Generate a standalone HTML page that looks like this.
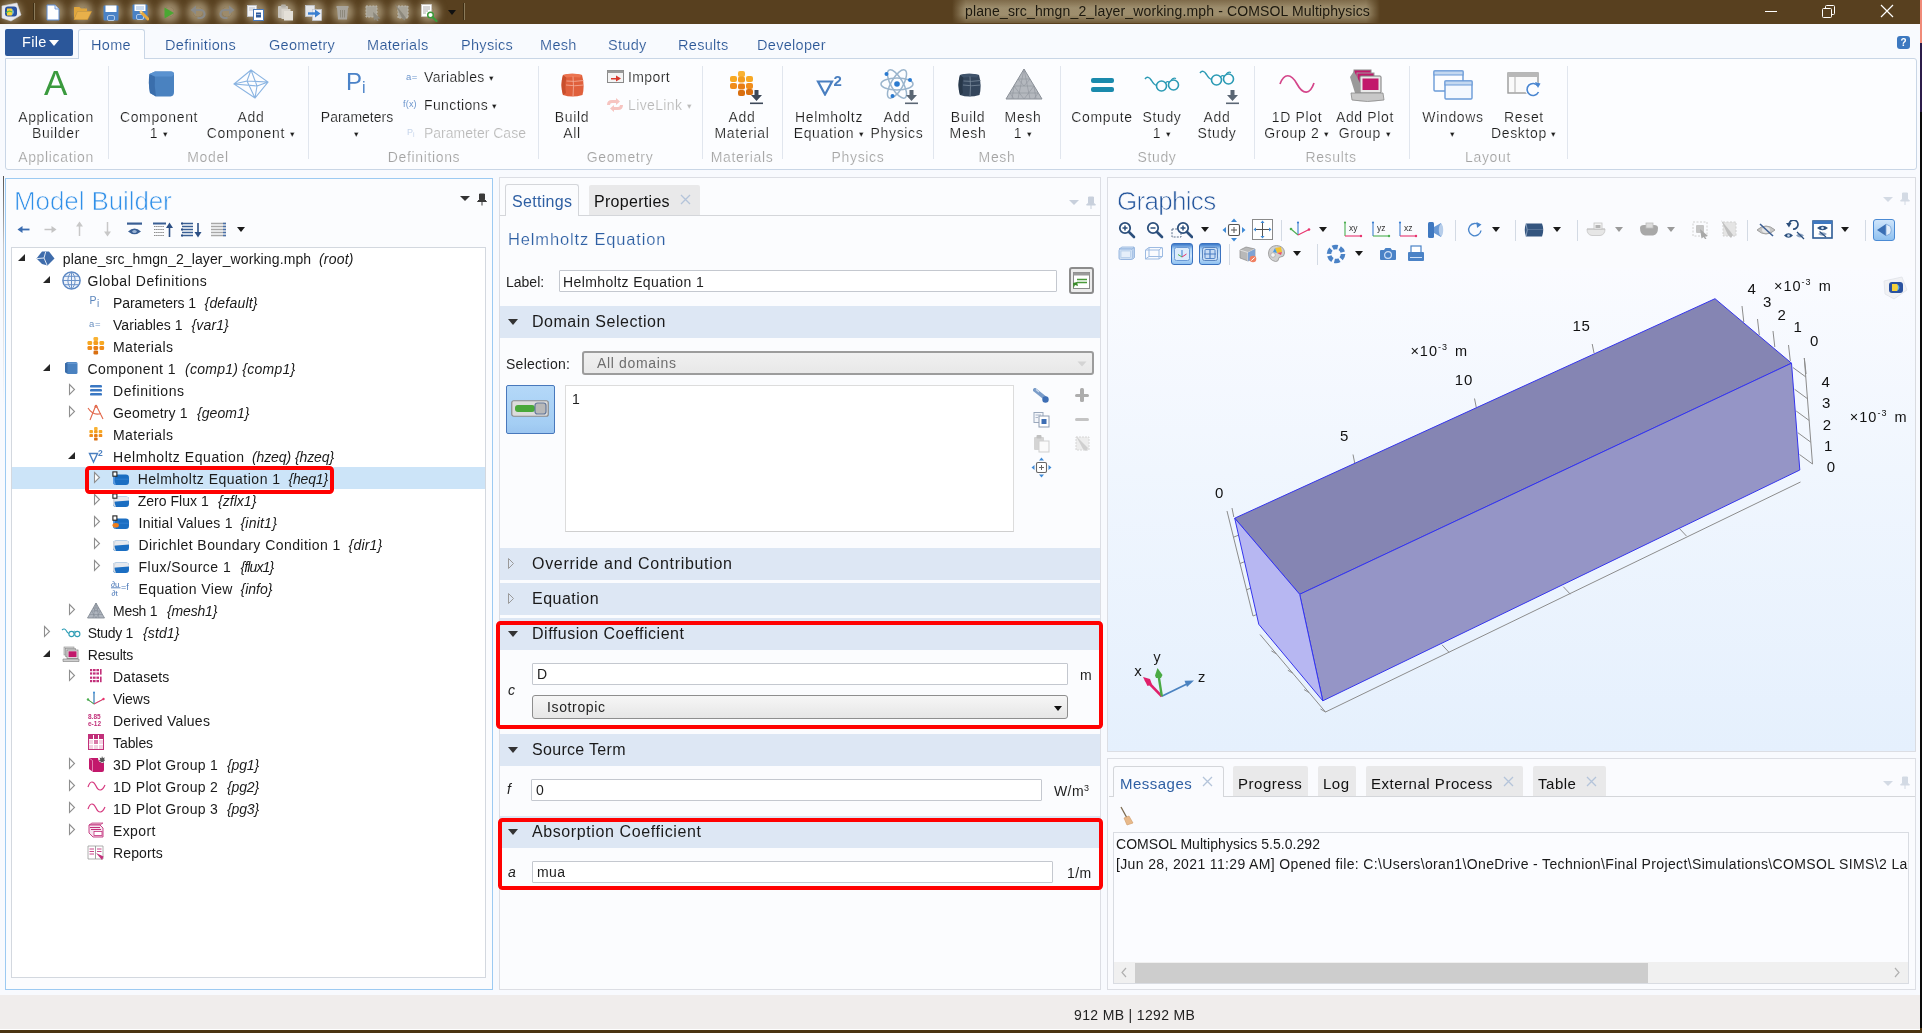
<!DOCTYPE html>
<html><head><meta charset="utf-8"><title>COMSOL Multiphysics</title>
<style>
*{box-sizing:border-box;margin:0;padding:0}
html,body{width:1922px;height:1033px;overflow:hidden;background:#f0edec;font-family:"Liberation Sans",sans-serif;font-size:14px;color:#1e1e1e}
.a{position:absolute}
#root{position:absolute;left:0;top:0;width:1922px;height:1033px;overflow:hidden;will-change:transform;opacity:.999}
.t{position:absolute;white-space:nowrap;line-height:1}
svg{display:block}
.ic{position:absolute}
#titlebar{left:0;top:0;width:1922px;height:24px;background:#58401f}
#bottomstrip{left:0;top:1029px;width:1922px;height:4px;background:#4a3412;border-top:1px solid #fff}
#tabrow{left:0;top:24px;width:1922px;height:971px;background:#f8fafe}
#ribbon{left:5px;top:58px;width:1912px;height:112px;background:#fcfdff;border:1px solid #c9d6e6;border-radius:0 3px 3px 3px}
#gap{left:0;top:170px;width:1922px;height:8px;background:#f8fafe}
.tab{position:absolute;top:38px;font-size:14.5px;color:#2b5797;white-space:nowrap;line-height:1;letter-spacing:.3px}
.rl,.rs,.gl{-webkit-text-stroke:.18px #fcfdff}
.tab{-webkit-text-stroke:.15px #f8fafe}
.rl{position:absolute;font-size:14px;color:#1c1c1c;white-space:nowrap;line-height:16px;text-align:center;transform:translateX(-50%);letter-spacing:.65px}
.rs{position:absolute;font-size:14px;color:#1c1c1c;white-space:nowrap;line-height:16px;letter-spacing:.38px}
.gl{position:absolute;top:150px;font-size:14px;color:#a3a3a3;white-space:nowrap;line-height:1;transform:translateX(-50%);letter-spacing:.65px}
.gs{position:absolute;top:66px;width:1px;height:93px;background:#e1e6ee}
.dis{color:#b9b9b9}
.dd{font-size:9px;position:relative;top:-1px}
.panel{position:absolute;background:#fbfcfe;border:1px solid #c9d9ea}
.tr{position:absolute;height:22px;line-height:22px;font-size:14px;white-space:nowrap;letter-spacing:.45px;color:#1a1a1a}
.tr i{letter-spacing:.2px;margin-left:4px}
.ex{position:absolute;width:0;height:0;border-left:7px solid transparent;border-bottom:7px solid #262626}
.co{position:absolute}
.sh{position:absolute;left:500px;width:600px;height:28px;background:#dde7f4}
.sht{position:absolute;left:532px;font-size:16px;line-height:28px;white-space:nowrap;letter-spacing:.6px;color:#1a1a1a}
.shd{position:absolute;left:508px;width:0;height:0;border-left:5px solid transparent;border-right:5px solid transparent;border-top:6px solid #333}
.inp{position:absolute;background:#fff;border:1px solid #c4c8cf;border-radius:1px;font-size:14px;line-height:20px;padding-left:4px;white-space:nowrap;letter-spacing:.4px}
.lb{position:absolute;font-size:14px;white-space:nowrap;line-height:1;letter-spacing:.4px}
.redbox{position:absolute;border:4px solid #ff0000;border-radius:4.500px}
.ptab{position:absolute;font-size:16px;white-space:nowrap;line-height:1;letter-spacing:.3px}
</style></head><body>
<div id="root">
<div class="a" id="titlebar"></div>
<div class="a" id="tabrow"></div>
<div class="a" id="gap"></div>
<div class="a" id="ribbon"></div>
<!-- title -->
<div class="a" style="left:0;top:0;width:1922px;height:24px;background:#58401f"></div>
<div class="a" style="left:6px;top:7px;width:10px;height:10px;border-radius:50%;background:rgba(226,214,184,0.45);box-shadow:0 0 7px 6px rgba(226,214,184,0.45)"></div>
<div class="a" style="left:48px;top:7px;width:10px;height:10px;border-radius:50%;background:rgba(226,214,184,0.5);box-shadow:0 0 7px 6px rgba(226,214,184,0.5)"></div>
<div class="a" style="left:77px;top:7px;width:10px;height:10px;border-radius:50%;background:rgba(226,214,184,0.5);box-shadow:0 0 7px 6px rgba(226,214,184,0.5)"></div>
<div class="a" style="left:106px;top:7px;width:10px;height:10px;border-radius:50%;background:rgba(226,214,184,0.5);box-shadow:0 0 7px 6px rgba(226,214,184,0.5)"></div>
<div class="a" style="left:135px;top:7px;width:10px;height:10px;border-radius:50%;background:rgba(226,214,184,0.5);box-shadow:0 0 7px 6px rgba(226,214,184,0.5)"></div>
<div class="a" style="left:164px;top:7px;width:10px;height:10px;border-radius:50%;background:rgba(226,214,184,0.5);box-shadow:0 0 7px 6px rgba(226,214,184,0.5)"></div>
<div class="a" style="left:193px;top:7px;width:10px;height:10px;border-radius:50%;background:rgba(226,214,184,0.5);box-shadow:0 0 7px 6px rgba(226,214,184,0.5)"></div>
<div class="a" style="left:221.5px;top:7px;width:10px;height:10px;border-radius:50%;background:rgba(226,214,184,0.5);box-shadow:0 0 7px 6px rgba(226,214,184,0.5)"></div>
<div class="a" style="left:250.5px;top:7px;width:10px;height:10px;border-radius:50%;background:rgba(226,214,184,0.5);box-shadow:0 0 7px 6px rgba(226,214,184,0.5)"></div>
<div class="a" style="left:280px;top:7px;width:10px;height:10px;border-radius:50%;background:rgba(226,214,184,0.5);box-shadow:0 0 7px 6px rgba(226,214,184,0.5)"></div>
<div class="a" style="left:308.5px;top:7px;width:10px;height:10px;border-radius:50%;background:rgba(226,214,184,0.5);box-shadow:0 0 7px 6px rgba(226,214,184,0.5)"></div>
<div class="a" style="left:337.5px;top:7px;width:10px;height:10px;border-radius:50%;background:rgba(226,214,184,0.5);box-shadow:0 0 7px 6px rgba(226,214,184,0.5)"></div>
<div class="a" style="left:367.5px;top:7px;width:10px;height:10px;border-radius:50%;background:rgba(226,214,184,0.5);box-shadow:0 0 7px 6px rgba(226,214,184,0.5)"></div>
<div class="a" style="left:396px;top:7px;width:10px;height:10px;border-radius:50%;background:rgba(226,214,184,0.5);box-shadow:0 0 7px 6px rgba(226,214,184,0.5)"></div>
<div class="a" style="left:423.5px;top:7px;width:10px;height:10px;border-radius:50%;background:rgba(226,214,184,0.5);box-shadow:0 0 7px 6px rgba(226,214,184,0.5)"></div>
<svg class="a" style="left:0.0px;top:2.0px" width="22" height="20" viewBox="0 0 22 20"><path d="M2 4 L17 1 L21 13 L11 19 L2 16Z" fill="#e8e8ec" stroke="#cfd2da" stroke-width=".6"/><rect x="5" y="4.500" width="12" height="10" rx="3" fill="#2a52a0"/><path d="M7 6.500 H11.500 Q15 10 11.500 13.500 H7Z" fill="#f6d23a"/><path d="M11.500 6.500 Q16.500 10 11.500 13.500 Q13.500 10 11.500 6.500Z" fill="#5ab0e8"/><path d="M6 11 Q9 8 12 10" stroke="#5aba4a" stroke-width="1.200" fill="none"/></svg>
<div class="a" style="left:33px;top:3px;width:2px;height:17px;background:#8a7a5a;border-left:1px solid #3e2e14"></div>
<div class="a" style="left:463px;top:3px;width:2px;height:17px;background:#8a7a5a;border-left:1px solid #3e2e14"></div>
<svg class="a" style="left:46.0px;top:4.0px" width="14" height="17" viewBox="0 0 14 17"><path d="M1 1 H9 L13 5 V16 H1Z" fill="#fff" stroke="#5a8ad0" stroke-width="1"/><path d="M9 1 V5 H13" fill="#e4ecf8" stroke="#5a8ad0" stroke-width=".8"/></svg>
<svg class="a" style="left:72.5px;top:5.5px" width="19" height="14" viewBox="0 0 19 14"><path d="M1 1.500 Q1 1 1.500 1 H6.500 L8 2.500 H14 V5 H4.500 L1 13Z" fill="#e0a63c"/><path d="M4.500 5.500 H18.500 L14.500 13.500 H1Z" fill="#e8b04a" stroke="#d89c30" stroke-width=".5"/></svg>
<svg class="a" style="left:103.0px;top:4.5px" width="16" height="16" viewBox="0 0 16 16"><rect x=".5" y=".5" width="15" height="15" rx="1" fill="#4a82c6"/><rect x="2.500" y=".5" width="11" height="6.500" fill="#fff"/><rect x="4.500" y="10.500" width="7" height="5" rx="1.500" fill="#4a82c6" stroke="#bcd2ee" stroke-width=".9"/></svg>
<svg class="a" style="left:131.5px;top:4.0px" width="17" height="17" viewBox="0 0 17 17"><rect x=".5" y=".5" width="15" height="15" rx="1" fill="#4a82c6"/><rect x="2.500" y=".5" width="11" height="6.500" fill="#fff"/><path d="M4 3H12M4 5H12" stroke="#7aa4dc" stroke-width=".8"/><rect x="4.500" y="10.500" width="7" height="5" rx="1.500" fill="#4a82c6" stroke="#bcd2ee" stroke-width=".9"/><path d="M9 8 L16 15" stroke="#e8a83a" stroke-width="3" stroke-linecap="round"/><path d="M8 7 l2.500 .8 -1.700 1.700z" fill="#f4e0b0"/></svg>
<svg class="a" style="left:163.0px;top:6.5px" width="12" height="12" viewBox="0 0 12 12"><path d="M1.500 .5 L11 6 L1.500 11.500Z" fill="#4aa832"/></svg>
<svg class="a" style="left:189.5px;top:5.0px" width="17" height="15" viewBox="0 0 17 15"><path d="M4 5 H10.500 A4 4 0 0 1 10.500 13 H7.500" fill="none" stroke="#8a8a88" stroke-width="2.200"/><path d="M0.500 5 L6 0.500 V9.500Z" fill="#8a8a88"/></svg>
<svg class="a" style="left:218.0px;top:5.0px" width="17" height="15" viewBox="0 0 17 15"><path d="M13 5 H6.500 A4 4 0 0 0 6.500 13 H9.500" fill="none" stroke="#8a8a88" stroke-width="2.200"/><path d="M16.500 5 L11 0.500 V9.500Z" fill="#8a8a88"/></svg>
<svg class="a" style="left:247.0px;top:4.5px" width="17" height="16" viewBox="0 0 17 16"><rect x=".5" y=".5" width="9" height="11" fill="#f4f4f6" stroke="#c4c8d0" stroke-width=".8"/><path d="M2 3H8M2 5H6" stroke="#a8b0c0" stroke-width=".7"/><rect x="6.500" y="4.500" width="10" height="11" fill="#fff" stroke="#4a78b8" stroke-width="1"/><rect x="9" y="7.500" width="5" height="5" fill="#2e5a9c"/><path d="M9.500 9.500H13.500" stroke="#cfdcf0" stroke-width=".7"/></svg>
<svg class="a" style="left:276.5px;top:4.0px" width="17" height="17" viewBox="0 0 17 17"><rect x="1" y="2" width="10" height="12" rx="1" fill="#c8c4bc"/><rect x="4" y=".5" width="5" height="3" rx="1" fill="#b4b0a8"/><rect x="4.500" y="5" width="9" height="10" fill="#d8d4cc"/><rect x="7" y="7" width="9" height="9.500" fill="#e4e0d8"/></svg>
<svg class="a" style="left:305.0px;top:4.5px" width="17" height="16" viewBox="0 0 17 16"><rect x=".5" y=".5" width="9" height="11" fill="#e4e6ea" stroke="#c4c8d0" stroke-width=".7"/><rect x="7.500" y="4.500" width="9" height="11" fill="#eceef2" stroke="#c4c8d0" stroke-width=".7"/><path d="M3 8.500 H11" stroke="#3a7fd0" stroke-width="2.400"/><path d="M10 4.500 L15.500 8.500 L10 12.500Z" fill="#3a7fd0"/></svg>
<svg class="a" style="left:336.0px;top:5.0px" width="13" height="15" viewBox="0 0 13 15"><path d="M1 3 H12 L11 14.500 H2Z" fill="#a8a49c"/><rect x="0.500" y="1" width="12" height="2" fill="#a8a49c"/><path d="M4.500 5V12.500M6.500 5V12.500M8.500 5V12.500" stroke="#8a8678" stroke-width=".9"/></svg>
<svg class="a" style="left:364.5px;top:4.5px" width="16" height="16" viewBox="0 0 16 16"><rect x="1" y="1" width="11" height="11" fill="#a8a498" stroke="#bcb8ac" stroke-width="1" stroke-dasharray="2 1.200"/><path d="M8 7 L15.500 13.500 L12.500 13.500 L13.500 16 L12 16 L11 14 L9 15.500Z" fill="#8c887c"/></svg>
<svg class="a" style="left:393.5px;top:4.0px" width="15" height="17" viewBox="0 0 15 17"><rect x="4" y="2" width="10" height="12" fill="#a8a498" stroke="#bcb8ac" stroke-width="1" stroke-dasharray="2 1.200"/><path d="M1 0 L8 14 L10.500 16.500 L12 14 L9.500 10.500Z" fill="#8c887c"/></svg>
<svg class="a" style="left:421.0px;top:4.0px" width="17" height="18" viewBox="0 0 17 18"><rect x=".5" y=".5" width="10" height="12" fill="#fff" stroke="#d0d0d0" stroke-width=".6"/><path d="M2 3H9M2 5H9M2 7H7M2 9H5" stroke="#9a9a9a" stroke-width=".8"/><circle cx="9.500" cy="11" r="2.800" fill="#fff" stroke="#3a9a3a" stroke-width="1.500"/><path d="M11.700 13.300 L15.500 17" stroke="#3a9a3a" stroke-width="2.200" stroke-linecap="round"/></svg>
<div class="a" style="left:448px;top:10px;width:0;height:0;border-left:4px solid transparent;border-right:4px solid transparent;border-top:5px solid #111"></div>
<div class="a" style="left:952px;top:0;width:428px;height:23px;background:linear-gradient(90deg,rgba(170,156,124,0) 0,rgba(170,156,124,.85) 14px,rgba(170,156,124,.85) 414px,rgba(170,156,124,0) 428px);-webkit-mask-image:linear-gradient(rgba(0,0,0,.55),#000 35%,#000 65%,rgba(0,0,0,.35));mask-image:linear-gradient(rgba(0,0,0,.55),#000 35%,#000 65%,rgba(0,0,0,.35))"></div>
<div class="t" style="left:965px;top:4px;font-size:14px;letter-spacing:.14px;color:#1c180e">plane_src_hmgn_2_layer_working.mph - COMSOL Multiphysics</div>
<div class="a" style="left:1765px;top:11px;width:12px;height:1px;background:#fff"></div>
<svg class="a" style="left:1822px;top:5px" width="13" height="13" viewBox="0 0 13 13"><path d="M3.500 3.500 V1.500 Q3.500 .5 4.500 .5 H11.500 Q12.500 .5 12.500 1.500 V8.500 Q12.500 9.500 11.500 9.500 H9.500" fill="none" stroke="#fff" stroke-width="1"/><rect x=".5" y="3.500" width="9" height="9" rx="1" fill="none" stroke="#fff" stroke-width="1"/></svg>
<svg class="a" style="left:1880px;top:4px" width="14" height="14" viewBox="0 0 14 14"><path d="M1 1 L13 13 M13 1 L1 13" stroke="#fff" stroke-width="1.200"/></svg>

<!-- ribbon -->
<div class="a" style="left:5px;top:29px;width:68px;height:27px;background:#2b579a;border-radius:2px"></div>
<div class="t" style="left:22px;top:35px;font-size:14.5px;color:#fff;letter-spacing:.3px">File</div>
<div class="a" style="left:49px;top:40px;width:0;height:0;border-left:5px solid transparent;border-right:5px solid transparent;border-top:6px solid #fff"></div>
<div class="a" style="left:78px;top:29px;width:67px;height:30px;background:#fcfdff;border:1px solid #c9d6e6;border-bottom:none;border-radius:3px 3px 0 0"></div>
<div class="tab" style="left:91px">Home</div>
<div class="tab" style="left:165px">Definitions</div>
<div class="tab" style="left:269px">Geometry</div>
<div class="tab" style="left:367px">Materials</div>
<div class="tab" style="left:461px">Physics</div>
<div class="tab" style="left:540px">Mesh</div>
<div class="tab" style="left:608px">Study</div>
<div class="tab" style="left:678px">Results</div>
<div class="tab" style="left:757px">Developer</div>
<div class="a" style="left:1897px;top:36px;width:13px;height:13px;background:#3c78c0;border-radius:3px;color:#fff;font-size:10px;font-weight:bold;text-align:center;line-height:13px">?</div>
<div class="gs" style="left:108px"></div>
<div class="gs" style="left:308px"></div>
<div class="gs" style="left:538px"></div>
<div class="gs" style="left:702px"></div>
<div class="gs" style="left:782px"></div>
<div class="gs" style="left:933px"></div>
<div class="gs" style="left:1060px"></div>
<div class="gs" style="left:1254px"></div>
<div class="gs" style="left:1409px"></div>
<div class="gs" style="left:1567px"></div>
<div class="gl" style="left:56px">Application</div>
<div class="gl" style="left:208px">Model</div>
<div class="gl" style="left:424px">Definitions</div>
<div class="gl" style="left:620px">Geometry</div>
<div class="gl" style="left:742px">Materials</div>
<div class="gl" style="left:858px">Physics</div>
<div class="gl" style="left:997px">Mesh</div>
<div class="gl" style="left:1157px">Study</div>
<div class="gl" style="left:1331px">Results</div>
<div class="gl" style="left:1488px">Layout</div>
<div class="rl" style="left:56px;top:109px">Application<br>Builder</div>
<div class="rl" style="left:159px;top:109px">Component<br>1 <span class="dd">▾</span></div>
<div class="rl" style="left:251px;top:109px">Add<br>Component <span class="dd">▾</span></div>
<div class="rl" style="left:357px;top:109px"><span style="letter-spacing:0">Parameters</span><br><span class="dd">▾</span></div>
<div class="rl" style="left:572px;top:109px">Build<br>All</div>
<div class="rl" style="left:742px;top:109px">Add<br>Material</div>
<div class="rl" style="left:829px;top:109px">Helmholtz<br>Equation <span class="dd">▾</span></div>
<div class="rl" style="left:897px;top:109px">Add<br>Physics</div>
<div class="rl" style="left:968px;top:109px">Build<br>Mesh</div>
<div class="rl" style="left:1023px;top:109px">Mesh<br>1 <span class="dd">▾</span></div>
<div class="rl" style="left:1102px;top:109px">Compute</div>
<div class="rl" style="left:1162px;top:109px">Study<br>1 <span class="dd">▾</span></div>
<div class="rl" style="left:1217px;top:109px">Add<br>Study</div>
<div class="rl" style="left:1297px;top:109px">1D Plot<br>Group 2 <span class="dd">▾</span></div>
<div class="rl" style="left:1365px;top:109px">Add Plot<br>Group <span class="dd">▾</span></div>
<div class="rl" style="left:1453px;top:109px">Windows<br><span class="dd">▾</span></div>
<div class="rl" style="left:1524px;top:109px">Reset<br>Desktop <span class="dd">▾</span></div>
<div class="rs" style="left:424px;top:69px">Variables <span class="dd">▾</span></div>
<div class="rs" style="left:424px;top:97px">Functions <span class="dd">▾</span></div>
<div class="rs dis" style="left:424px;top:125px"><span style="letter-spacing:0">Parameter Case</span></div>
<div class="rs" style="left:628px;top:69px">Import</div>
<div class="rs dis" style="left:628px;top:97px">LiveLink <span class="dd">▾</span></div>

<!-- ribicons -->
<div class="t" style="left:44px;top:65px;font-size:35px;color:#3a9a3e;">A</div>
<svg class="a" style="left:147px;top:70px" width="28" height="28" viewBox="0 0 28 28"><path d="M2.500 4 L8 1.500 H24 Q27 1.500 27 4.500 V22 Q27 26 23.500 26.500 H9 L3 23 Q1 12 2.500 4Z" fill="#4a82c0"/><path d="M2.500 4 L8 6.500 Q7 16 9 26.500 L3 23 Q1 12 2.500 4Z" fill="#3a6eac"/><path d="M2.500 4 L8 1.500 H24 Q27 1.500 27 4.500 L25 6.500 H8Z" fill="#5a92d0"/></svg>
<svg class="a" style="left:233px;top:69px" width="36" height="30" viewBox="0 0 36 30"><path d="M18 1 L35 13 L22 29 L1 15Z M18 1 L14 12 L1 15 M14 12 L22 29 M14 12 L35 13 M18 1 L24 17 L35 13 M24 17 L22 29 M24 17 L1 15" fill="none" stroke="#8ab4e2" stroke-width="1.100"/></svg>
<div class="t" style="left:346px;top:70px;font-size:24px;color:#4a82c8">P</div><div class="t" style="left:362px;top:80px;font-size:16px;color:#4a82c8">i</div>
<div class="t" style="left:406px;top:72px;font-size:9.500px;color:#6a94cc;letter-spacing:.5px">a=</div>
<div class="t" style="left:403px;top:100px;font-size:9px;color:#6a94cc;letter-spacing:.2px">f(x)</div>
<div class="t" style="left:407px;top:128px;font-size:9px;color:#c4d4ea">P<span style="font-size:7px;position:relative;top:2px">i</span></div>
<svg class="a" style="left:560px;top:73px" width="25" height="25" viewBox="0 0 25 25"><path d="M3 2 Q12 -0.500 22 2 Q25 12 22.500 22 Q12 25 3 22 Q0 12 3 2Z" fill="#e0603c"/><path d="M3 2 Q0 12 3 22 L6 20 Q4.500 12 6.500 4.500Z" fill="#c84e2c"/><path d="M3 2 Q12 -0.500 22 2 L20 4.500 Q12 3.500 6.500 4.500Z" fill="#ec7450"/><path d="M6 12 Q14 13.500 24 12 M13 3.500 Q14 13 13 24 M6.500 8 Q14 9 23.500 7.500" stroke="#f4b09c" stroke-width=".8" fill="none"/></svg>
<svg class="a" style="left:607px;top:70px" width="17" height="13" viewBox="0 0 17 13"><rect x=".5" y=".5" width="16" height="12" fill="#f4f4f4" stroke="#8a8a8a" stroke-width="1"/><rect x=".5" y=".5" width="16" height="2.500" fill="#9a9a9a"/><path d="M4 8 H9 V5.500 L14 8.500 L9 11.500 V9.500 H4Z" fill="#d8382c"/></svg>
<svg class="a" style="left:604px;top:97px" width="22" height="16" viewBox="0 0 22 16"><path d="M3 8 Q3 3 8 3 H12 V1 L16 4.500 L12 8 V6 H8 Q6 6 6 8Z" fill="#f6c4c0"/><path d="M19 8 Q19 13 14 13 H10 V15 L6 11.500 L10 8 V10 H14 Q16 10 16 8Z" fill="#f6c4c0"/></svg>
<svg class="a" style="left:729px;top:71px" width="26" height="26" viewBox="0 0 26 26"><rect x="9" y="0" width="7" height="6" rx="2" fill="#f9b233"/><rect x="1" y="5" width="7" height="6" rx="2" fill="#f7a823"/><rect x="9" y="5.5" width="7" height="6" rx="2" fill="#f39c1f"/><rect x="17" y="5" width="7" height="6" rx="2" fill="#f7a823"/><rect x="1" y="12" width="7" height="6" rx="2" fill="#f08c1a"/><rect x="9" y="12.5" width="7" height="6" rx="2" fill="#e87d14"/><rect x="17" y="12" width="7" height="6" rx="2" fill="#f08c1a"/><rect x="9" y="19" width="7" height="6" rx="2" fill="#d96f10"/><rect x="17" y="18" width="7" height="6" rx="2" fill="#d96f10"/></svg>
<svg class="a" style="left:750px;top:90px" width="13" height="15" viewBox="0 0 13 15"><path d="M4.500 0 H8.500 V5 H12 L6.500 11 L1 5 H4.500Z" fill="#3c4858"/><rect x="0" y="12.500" width="13" height="1.600" fill="#3c4858"/></svg>
<svg class="a" style="left:816px;top:74px" width="30" height="22" viewBox="0 0 30 22"><path d="M2 7.500 H16 L9 20.500 Z" fill="none" stroke="#4a7fc0" stroke-width="2.200" stroke-linejoin="miter"/><text x="17.500" y="11.500" font-family="Liberation Sans, sans-serif" font-size="15" font-weight="bold" fill="#4a7fc0">2</text></svg>
<svg class="a" style="left:880px;top:66px" width="36" height="36" viewBox="0 0 36 36"><g fill="none" stroke="#9ab4cc" stroke-width="1.500"><ellipse cx="17" cy="18" rx="16" ry="6"/><ellipse cx="17" cy="18" rx="16" ry="6" transform="rotate(60 17 18)"/><ellipse cx="17" cy="18" rx="16" ry="6" transform="rotate(120 17 18)"/></g><circle cx="17" cy="18" r="2.800" fill="#2a7ad0"/><circle cx="6.500" cy="8" r="2" fill="#2a7ad0"/><circle cx="30" cy="14" r="2" fill="#2a7ad0"/><circle cx="12.500" cy="30" r="2" fill="#2a7ad0"/></svg>
<svg class="a" style="left:905px;top:90px" width="13" height="15" viewBox="0 0 13 15"><path d="M4.500 0 H8.500 V5 H12 L6.500 11 L1 5 H4.500Z" fill="#5a6674"/><rect x="0" y="12.500" width="13" height="1.600" fill="#5a6674"/></svg>
<svg class="a" style="left:957px;top:73px" width="25" height="25" viewBox="0 0 25 25"><path d="M3 2 Q12 -0.500 22 2 Q25 12 22.500 22 Q12 25 3 22 Q0 12 3 2Z" fill="#34465c"/><path d="M3 2 Q0 12 3 22 L6 20 Q4.500 12 6.500 4.500Z" fill="#28384a"/><path d="M3 2 Q12 -0.500 22 2 L20 4.500 Q12 3.500 6.500 4.500Z" fill="#40546c"/><path d="M6 12 Q14 13.500 24 12 M13 3.500 Q14 13 13 24 M6.500 8 Q14 9 23.500 7.500" stroke="#7a8a9c" stroke-width=".8" fill="none"/></svg>
<svg class="a" style="left:1005px;top:68px" width="38" height="33" viewBox="0 0 38 33"><path d="M19 1 L37 31 H1 Z" fill="#b4b8be" stroke="#8a9098" stroke-width="1"/><path d="M13 11 H25 M9 18 H29 M5 25 H33 M19 1 L13 31 M19 1 L25 31 M9 18 L19 31 L29 18 M13 11 L19 18 L25 11 M5 25 L9 31 M33 25 L29 31 M9 18 L7 31 M29 18 L31 31" stroke="#8e949c" stroke-width=".6" fill="none"/></svg>
<div class="a" style="left:1091px;top:78px;width:23px;height:5px;background:#1a8aac;border-radius:2px"></div><div class="a" style="left:1091px;top:87px;width:23px;height:5px;background:#1a8aac;border-radius:2px"></div>
<svg class="a" style="left:1144px;top:74px" width="36" height="19" viewBox="0 0 36 19"><path d="M1 5 Q4 1 7.500 6.500 Q10 11 13 11.500" stroke="#2a9ab4" stroke-width="1.500" fill="none"/><circle cx="17.500" cy="12" r="5" fill="none" stroke="#2a9ab4" stroke-width="1.600"/><circle cx="29.500" cy="11" r="5" fill="none" stroke="#2a9ab4" stroke-width="1.600"/><path d="M21.500 9 Q23.500 6.500 25.500 8.500" stroke="#2a9ab4" stroke-width="1.400" fill="none"/><path d="M27 6.500 Q29 3 32 4.500" stroke="#2a9ab4" stroke-width="1.300" fill="none"/></svg>
<svg class="a" style="left:1199px;top:68px" width="36" height="19" viewBox="0 0 36 19"><path d="M1 5 Q4 1 7.500 6.500 Q10 11 13 11.500" stroke="#2a9ab4" stroke-width="1.500" fill="none"/><circle cx="17.500" cy="12" r="5" fill="none" stroke="#2a9ab4" stroke-width="1.600"/><circle cx="29.500" cy="11" r="5" fill="none" stroke="#2a9ab4" stroke-width="1.600"/><path d="M21.500 9 Q23.500 6.500 25.500 8.500" stroke="#2a9ab4" stroke-width="1.400" fill="none"/><path d="M27 6.500 Q29 3 32 4.500" stroke="#2a9ab4" stroke-width="1.300" fill="none"/></svg>
<svg class="a" style="left:1226px;top:90px" width="13" height="15" viewBox="0 0 13 15"><path d="M4.500 0 H8.500 V5 H12 L6.500 11 L1 5 H4.500Z" fill="#5a6674"/><rect x="0" y="12.500" width="13" height="1.600" fill="#5a6674"/></svg>
<svg class="a" style="left:1278px;top:74px" width="38" height="20" viewBox="0 0 38 20"><path d="M2 10 C6 -1 13 -1 19 10 S32 21 36 9" stroke="#d4458a" stroke-width="1.700" fill="none"/></svg>
<svg class="a" style="left:1347px;top:69px" width="38" height="34" viewBox="0 0 38 34"><rect x="7" y="1" width="17" height="13" fill="#c2186b" stroke="#8a8a8a" stroke-width="1"/><rect x="10" y="4" width="17" height="13" fill="#c2186b" stroke="#9a9a9a" stroke-width="1"/><rect x="13" y="7" width="21" height="17" rx="1" fill="#e8e8e8" stroke="#7a7a7a" stroke-width="1"/><rect x="15.500" y="9.500" width="16" height="11.500" fill="#c2186b"/><path d="M3 8 L8 24 L13 24 V14 L7 2Z" fill="#9a9a9a"/><path d="M4 24 H36 L37 31 Q20 34 5 31Z" fill="#c8c8c8" stroke="#8a8a8a" stroke-width=".8"/></svg>
<svg class="a" style="left:1433px;top:70px" width="40" height="30" viewBox="0 0 40 30"><rect x="1" y="1" width="29" height="20" rx="1" fill="#fcfdff" stroke="#6a9ad8" stroke-width="1.400"/><rect x="1" y="1" width="29" height="4" fill="#c4d8f0" stroke="#6a9ad8" stroke-width="1"/><rect x="12" y="11" width="27" height="18" rx="1" fill="#f4f8fe" stroke="#6a9ad8" stroke-width="1.400"/><rect x="12" y="11" width="27" height="4" fill="#c4d8f0" stroke="#6a9ad8" stroke-width="1"/></svg>
<svg class="a" style="left:1507px;top:72px" width="35" height="26" viewBox="0 0 35 26"><rect x="1" y="1" width="30" height="20" fill="#fafafa" stroke="#9a9a9a" stroke-width="1.400"/><rect x="1" y="1" width="30" height="4" fill="#b8b8b8"/><path d="M8 5V21" stroke="#b0b0b0" stroke-width="1"/><circle cx="26" cy="17" r="8" fill="#fcfdff"/><path d="M31 14 A6 6 0 1 0 31.500 20" fill="none" stroke="#4a86d0" stroke-width="1.600"/><path d="M28 10 L33.500 11.500 L31 16Z" fill="#4a86d0"/></svg>

<!-- mb -->
<div class="panel" style="left:5px;top:178px;width:488px;height:812px;border-color:#9ccaf2"></div>
<div class="t" style="left:14px;top:188px;font-size:26px;color:#2f8fe8;letter-spacing:-.1px;-webkit-text-stroke:.7px #fbfcfe">Model Builder</div>
<div class="a" style="left:11px;top:247px;width:475px;height:731px;background:#fff;border:1px solid #d3d8df"></div>
<svg class="a" style="left:16.5px;top:225.0px" width="13" height="9" viewBox="0 0 13 9"><path d="M12.500 4.500 H4" stroke="#3a6cb0" stroke-width="1.800"/><path d="M0.500 4.500 L5.500 1 V8Z" fill="#3a6cb0"/></svg>
<svg class="a" style="left:44.0px;top:225.0px" width="13" height="9" viewBox="0 0 13 9"><path d="M0.500 4.500 H9" stroke="#c4c4c4" stroke-width="1.500"/><path d="M12.500 4.500 L7.500 1 V8Z" fill="#c4c4c4"/></svg>
<svg class="a" style="left:74.5px;top:221.0px" width="9" height="15" viewBox="0 0 9 15"><path d="M4.500 15 V4" stroke="#c8c8c8" stroke-width="1.500"/><path d="M4.500 0.500 L1 5.500 H8Z" fill="#c8c8c8"/></svg>
<svg class="a" style="left:102.5px;top:222.0px" width="9" height="15" viewBox="0 0 9 15"><path d="M4.500 0 V11" stroke="#c8c8c8" stroke-width="1.500"/><path d="M4.500 14.500 L1 9.500 H8Z" fill="#c8c8c8"/></svg>
<svg class="a" style="left:126.0px;top:221.5px" width="17" height="15" viewBox="0 0 17 15"><rect x="1" y=".5" width="15" height="2.200" fill="#3a5f94"/><path d="M2 9.500 Q8.500 3.500 15 9.500 Q8.500 15 2 9.500Z" fill="#3a5f94"/><ellipse cx="8.500" cy="9.500" rx="2.200" ry="1.600" fill="#9ab4d6"/></svg>
<svg class="a" style="left:153.0px;top:221.5px" width="20" height="16" viewBox="0 0 20 16"><path d="M1 1.500H11M1 4.500H11M1 7.500H11M1 10.500H11M1 13.500H11" stroke="#8a8a8a" stroke-width="1" stroke-dasharray="1.500 .6"/><rect x="0" y="0.500" width="13" height="2" fill="#3a5f94"/><path d="M16.500 15 V5" stroke="#2c4f84" stroke-width="1.600"/><path d="M16.500 0.500 L13 6 H20Z" fill="#2c4f84"/></svg>
<svg class="a" style="left:180.5px;top:221.5px" width="21" height="16" viewBox="0 0 21 16"><path d="M1 1.500H12M1 4.500H12M1 7.500H12M1 10.500H12M1 13.500H12" stroke="#3a5f94" stroke-width="1.600"/><path d="M0 1.500H2M0 7.500H2M0 13.500H2" stroke="#2c4f84" stroke-width="2"/><path d="M17 1 V11" stroke="#2c4f84" stroke-width="1.600"/><path d="M17 15.500 L13.500 10 H20.500Z" fill="#2c4f84"/></svg>
<svg class="a" style="left:210.0px;top:221.5px" width="17" height="16" viewBox="0 0 17 16"><path d="M1 1.500H16M1 4.500H16M1 7.500H16M1 10.500H16M1 13.500H16" stroke="#a8a8a8" stroke-width="1.300"/><path d="M13 1.500H16M13 4.500H16M13 7.500H16M13 10.500H16M13 13.500H16" stroke="#4a6fa8" stroke-width="1.300"/></svg>
<div class="a" style="left:237px;top:227px;width:0;height:0;border-left:4.500px solid transparent;border-right:4.500px solid transparent;border-top:5.500px solid #1a1a1a"></div>
<div class="a" style="left:460px;top:195.500px;width:0;height:0;border-left:5px solid transparent;border-right:5px solid transparent;border-top:5px solid #333"></div>
<svg class="a" style="left:477px;top:193px" width="10" height="13" viewBox="0 0 10 13"><path d="M2.500 1 H7.500 V6.500 L9.500 8.500 H0.500 L2.500 6.500 Z M5 8.500 V12.500" fill="#3a3a3a" stroke="#3a3a3a" stroke-width="1"/></svg>
<div class="a" style="left:12px;top:467px;width:473px;height:22px;background:#cce4f8"></div>
<div class="ex" style="left:18px;top:254px"></div>
<div class="ic" style="left:35.5px;top:250.5px"><svg width="19" height="15" viewBox="0 0 19 15"><path d="M0.500 7.500 L6 0.500 H13 L18.500 7.500 L11.500 14.500 L6 13 Z" fill="#3f6cab"/><path d="M1 7.600 L8 7 L9.700 0.800 M8 7 L11 14" stroke="#dfe8f4" stroke-width="1" fill="none"/></svg></div>
<div class="tr" style="left:62.8px;top:248px;letter-spacing:0.12px">plane_src_hmgn_2_layer_working.mph</div>
<div class="tr" style="left:318.9px;top:248px;letter-spacing:0.23px;font-style:italic">(root)</div>
<div class="ex" style="left:43px;top:276px"></div>
<div class="ic" style="left:61.5px;top:270.5px"><svg width="19" height="19" viewBox="0 0 19 19"><circle cx="9.500" cy="9.500" r="8.600" fill="#eef3fb" stroke="#5a86c2" stroke-width="1.500"/><path d="M9.500 1v17M1 9.500h17M2.500 5.300h14M2.500 13.700h14M9.500 1c-4.800 4-4.800 13 0 17M9.500 1c4.800 4 4.800 13 0 17" stroke="#6a92c8" stroke-width="1" fill="none"/></svg></div>
<div class="tr" style="left:87.5px;top:270px;letter-spacing:0.56px">Global Definitions</div>
<div class="ic" style="left:88.0px;top:294.0px"><svg width="16" height="16" viewBox="0 0 16 16"><text x="1.500" y="9.500" font-family="Liberation Sans, sans-serif" font-size="10.500" fill="#5b86bd">P</text><text x="9" y="13" font-family="Liberation Sans, sans-serif" font-size="10" fill="#5b86bd">i</text></svg></div>
<div class="tr" style="left:113.0px;top:292px;letter-spacing:-0.10px">Parameters 1</div>
<div class="tr" style="left:204.5px;top:292px;letter-spacing:0.20px;font-style:italic">{default}</div>
<div class="ic" style="left:88.0px;top:316.0px"><svg width="16" height="16" viewBox="0 0 16 16"><text x="1" y="10.500" font-family="Liberation Sans, sans-serif" font-size="9.500" fill="#6a90c0" letter-spacing=".6">a=</text></svg></div>
<div class="tr" style="left:113.0px;top:314px;letter-spacing:0.05px">Variables 1</div>
<div class="tr" style="left:191.5px;top:314px;letter-spacing:0.14px;font-style:italic">{var1}</div>
<div class="ic" style="left:87.0px;top:337.0px"><svg width="18" height="18" viewBox="0 0 17 18"><rect x="6" y="0" width="4.6" height="4" rx="1.2" fill="#f9b233"/><rect x="0" y="4" width="4.6" height="4" rx="1.2" fill="#f7a823"/><rect x="6" y="4" width="4.6" height="4" rx="1.2" fill="#f39c1f"/><rect x="12" y="4" width="4.6" height="4" rx="1.2" fill="#f7a823"/><rect x="0" y="9" width="4.6" height="4" rx="1.2" fill="#f08c1a"/><rect x="6" y="9" width="4.6" height="4" rx="1.2" fill="#e87d14"/><rect x="12" y="9" width="4.6" height="4" rx="1.2" fill="#f08c1a"/><rect x="6" y="13.5" width="4.6" height="4" rx="1.2" fill="#d96f10"/></svg></div>
<div class="tr" style="left:113.0px;top:336px;letter-spacing:0.39px">Materials</div>
<div class="ex" style="left:43px;top:364px"></div>
<div class="ic" style="left:63.0px;top:360.0px"><svg width="16" height="16" viewBox="0 0 16 16"><path d="M2 3.5 L4.5 2 H13 Q14.5 2 14.5 3.5 V12.5 Q14.5 14 13 14 H5 L2 12 Z" fill="#4a82c0"/><path d="M2 3.5 L4.5 2 V14 L2 12Z" fill="#3a6ca8"/><path d="M4.5 3.2 H14" stroke="#7aa8dc" stroke-width=".8"/></svg></div>
<div class="tr" style="left:87.5px;top:358px;letter-spacing:0.39px">Component 1</div>
<div class="tr" style="left:185.1px;top:358px;letter-spacing:0.25px;font-style:italic">(comp1) {comp1}</div>
<svg class="co" style="left:68px;top:383px" width="8" height="13" viewBox="0 0 8 13"><path d="M1.5 1.5 L6.5 6.5 L1.5 11.5 Z" fill="#fff" stroke="#8f8f8f" stroke-width="1.1"/></svg>
<div class="ic" style="left:88.0px;top:382.0px"><svg width="16" height="16" viewBox="0 0 16 16"><rect x="2" y="3" width="12" height="2.6" rx="1.2" fill="#3b78c3"/><rect x="2" y="7" width="12" height="2.6" rx="1.2" fill="#3b78c3"/><rect x="2" y="11" width="12" height="2.6" rx="1.2" fill="#3b78c3"/></svg></div>
<div class="tr" style="left:113.0px;top:380px;letter-spacing:0.57px">Definitions</div>
<svg class="co" style="left:68px;top:405px" width="8" height="13" viewBox="0 0 8 13"><path d="M1.5 1.5 L6.5 6.5 L1.5 11.5 Z" fill="#fff" stroke="#8f8f8f" stroke-width="1.1"/></svg>
<div class="ic" style="left:87.0px;top:403.5px"><svg width="18" height="17" viewBox="0 0 18 17"><path d="M9 1 L3 16 M9 1 L16 15 M1 4 Q6 12 14 9.5" stroke="#e2674a" stroke-width="1.1" fill="none"/><circle cx="9" cy="2.5" r="1.2" fill="none" stroke="#e2674a" stroke-width=".8"/></svg></div>
<div class="tr" style="left:113.0px;top:402px;letter-spacing:0.15px">Geometry 1</div>
<div class="tr" style="left:197.0px;top:402px;letter-spacing:0.05px;font-style:italic">{geom1}</div>
<div class="ic" style="left:89.0px;top:427.0px"><svg width="14" height="14" viewBox="0 0 17 18"><rect x="6" y="0" width="4.6" height="4" rx="1.2" fill="#f9b233"/><rect x="0" y="4" width="4.6" height="4" rx="1.2" fill="#f7a823"/><rect x="6" y="4" width="4.6" height="4" rx="1.2" fill="#f39c1f"/><rect x="12" y="4" width="4.6" height="4" rx="1.2" fill="#f7a823"/><rect x="0" y="9" width="4.6" height="4" rx="1.2" fill="#f08c1a"/><rect x="6" y="9" width="4.6" height="4" rx="1.2" fill="#e87d14"/><rect x="12" y="9" width="4.6" height="4" rx="1.2" fill="#f08c1a"/><rect x="6" y="13.5" width="4.6" height="4" rx="1.2" fill="#d96f10"/></svg></div>
<div class="tr" style="left:113.0px;top:424px;letter-spacing:0.39px">Materials</div>
<div class="ex" style="left:68px;top:452px"></div>
<div class="ic" style="left:87.5px;top:448.0px"><svg width="17" height="16" viewBox="0 0 17 16"><path d="M1.5 5.5 H9.5 L5.5 14 Z" fill="none" stroke="#4a7fc0" stroke-width="1.4"/><text x="10" y="8" font-family="Liberation Sans, sans-serif" font-size="8.5" font-weight="bold" fill="#4a7fc0">2</text></svg></div>
<div class="tr" style="left:113.0px;top:446px;letter-spacing:0.57px">Helmholtz Equation</div>
<div class="tr" style="left:251.9px;top:446px;letter-spacing:-0.08px;font-style:italic">(hzeq) {hzeq}</div>
<svg class="co" style="left:93px;top:471px" width="8" height="13" viewBox="0 0 8 13"><path d="M1.5 1.5 L6.5 6.5 L1.5 11.5 Z" fill="#fff" stroke="#8f8f8f" stroke-width="1.1"/></svg>
<div class="ic" style="left:112.0px;top:470.5px"><svg width="18" height="15" viewBox="0 0 18 15"><rect x="1" y="3.500" width="16" height="10.500" rx="3.200" fill="#1b6ec2"/><path d="M4 3.700 Q1.200 8.500 4 13.800 Q1 13.500 1 10.800 V6.700 Q1 4 4 3.700Z" fill="#5a9ae0"/><path d="M3.500 8.200 H16.500" stroke="#3a86d8" stroke-width=".7"/><rect x=".9" y=".9" width="4" height="4.300" fill="#fff" stroke="#222" stroke-width="1.100"/></svg></div>
<div class="tr" style="left:137.7px;top:468px;letter-spacing:0.49px">Helmholtz Equation 1</div>
<div class="tr" style="left:288.5px;top:468px;letter-spacing:-0.18px;font-style:italic">{heq1}</div>
<svg class="co" style="left:93px;top:493px" width="8" height="13" viewBox="0 0 8 13"><path d="M1.5 1.5 L6.5 6.5 L1.5 11.5 Z" fill="#fff" stroke="#8f8f8f" stroke-width="1.1"/></svg>
<div class="ic" style="left:112.0px;top:492.5px"><svg width="18" height="15" viewBox="0 0 18 15"><rect x="1" y="3.500" width="16" height="10.500" rx="3.200" fill="#1b6ec2"/><path d="M4.200 3.500 H13.800 Q17 3.500 17 6.700 V7.600 L1 8.800 V6.700 Q1 3.500 4.200 3.500Z" fill="#e6e9ee"/><path d="M4 3.700 Q1.200 8.500 4 13.800 Q1 13.500 1 10.800 V6.700 Q1 4 4 3.700Z" fill="#d4d9e0"/><rect x=".9" y=".9" width="4" height="4.300" fill="#fff" stroke="#222" stroke-width="1.100"/></svg></div>
<div class="tr" style="left:137.7px;top:490px;letter-spacing:0.03px">Zero Flux 1</div>
<div class="tr" style="left:218.0px;top:490px;letter-spacing:0.03px;font-style:italic">{zflx1}</div>
<svg class="co" style="left:93px;top:515px" width="8" height="13" viewBox="0 0 8 13"><path d="M1.5 1.5 L6.5 6.5 L1.5 11.5 Z" fill="#fff" stroke="#8f8f8f" stroke-width="1.1"/></svg>
<div class="ic" style="left:112.0px;top:514.5px"><svg width="18" height="15" viewBox="0 0 18 15"><rect x="1" y="3.500" width="16" height="10.500" rx="3.200" fill="#1b6ec2"/><path d="M4 3.700 Q1.200 8.500 4 13.800 Q1 13.500 1 10.800 V6.700 Q1 4 4 3.700Z" fill="#5a9ae0"/><path d="M3.500 8.200 H16.500" stroke="#3a86d8" stroke-width=".7"/><rect x=".9" y=".9" width="4" height="4.300" fill="#fff" stroke="#222" stroke-width="1.100"/><ellipse cx="3.700" cy="10.300" rx="3.200" ry="2.300" fill="#ef7d1a"/></svg></div>
<div class="tr" style="left:138.5px;top:512px;letter-spacing:0.26px">Initial Values 1</div>
<div class="tr" style="left:240.4px;top:512px;letter-spacing:0.23px;font-style:italic">{init1}</div>
<svg class="co" style="left:93px;top:537px" width="8" height="13" viewBox="0 0 8 13"><path d="M1.5 1.5 L6.5 6.5 L1.5 11.5 Z" fill="#fff" stroke="#8f8f8f" stroke-width="1.1"/></svg>
<div class="ic" style="left:112.0px;top:536.5px"><svg width="18" height="15" viewBox="0 0 18 15"><rect x="1" y="3.500" width="16" height="10.500" rx="3.200" fill="#1b6ec2"/><path d="M4.200 3.500 H13.800 Q17 3.500 17 6.700 V7.600 L1 8.800 V6.700 Q1 3.500 4.200 3.500Z" fill="#e6e9ee"/><path d="M4 3.700 Q1.200 8.500 4 13.800 Q1 13.500 1 10.800 V6.700 Q1 4 4 3.700Z" fill="#d4d9e0"/></svg></div>
<div class="tr" style="left:138.5px;top:534px;letter-spacing:0.44px">Dirichlet Boundary Condition 1</div>
<div class="tr" style="left:348.5px;top:534px;letter-spacing:0.22px;font-style:italic">{dir1}</div>
<svg class="co" style="left:93px;top:559px" width="8" height="13" viewBox="0 0 8 13"><path d="M1.5 1.5 L6.5 6.5 L1.5 11.5 Z" fill="#fff" stroke="#8f8f8f" stroke-width="1.1"/></svg>
<div class="ic" style="left:112.0px;top:558.5px"><svg width="18" height="15" viewBox="0 0 18 15"><rect x="1" y="3.500" width="16" height="10.500" rx="3.200" fill="#1b6ec2"/><path d="M4.200 3.500 H13.800 Q17 3.500 17 6.700 V7.600 L1 8.800 V6.700 Q1 3.500 4.200 3.500Z" fill="#e6e9ee"/><path d="M4 3.700 Q1.200 8.500 4 13.800 Q1 13.500 1 10.800 V6.700 Q1 4 4 3.700Z" fill="#d4d9e0"/></svg></div>
<div class="tr" style="left:138.5px;top:556px;letter-spacing:0.49px">Flux/Source 1</div>
<div class="tr" style="left:240.5px;top:556px;letter-spacing:-0.89px;font-style:italic">{flux1}</div>
<div class="ic" style="left:111.0px;top:580.0px"><svg width="20" height="16" viewBox="0 0 20 16"><text x="0" y="6.500" font-family="Liberation Sans, sans-serif" font-size="8" fill="#4a78b8">∂u</text><path d="M0 7.800h9.500" stroke="#4a78b8" stroke-width=".9"/><text x="0.500" y="15.500" font-family="Liberation Sans, sans-serif" font-size="8" fill="#4a78b8">∂t</text><text x="10" y="10" font-family="Liberation Sans, sans-serif" font-size="9" fill="#4a78b8">=f</text></svg></div>
<div class="tr" style="left:138.5px;top:578px;letter-spacing:0.39px">Equation View</div>
<div class="tr" style="left:240.5px;top:578px;letter-spacing:0.01px;font-style:italic">{info}</div>
<svg class="co" style="left:68px;top:603px" width="8" height="13" viewBox="0 0 8 13"><path d="M1.5 1.5 L6.5 6.5 L1.5 11.5 Z" fill="#fff" stroke="#8f8f8f" stroke-width="1.1"/></svg>
<div class="ic" style="left:87.0px;top:601.5px"><svg width="18" height="17" viewBox="0 0 18 17"><path d="M9 1 L17.5 16 H0.5 Z" fill="#aeb4bd" stroke="#7f8791" stroke-width=".8"/><path d="M6.2 6 H11.8 M4.5 9 H13.5 M2.8 12.5 H15.2 M9 1 L6 16 M9 1 L12 16 M4.5 9 L9 16 L13.5 9 M6.2 6 L9 9 L11.8 6" stroke="#7f8791" stroke-width=".5" fill="none"/></svg></div>
<div class="tr" style="left:113.0px;top:600px;letter-spacing:-0.28px">Mesh 1</div>
<div class="tr" style="left:167.1px;top:600px;letter-spacing:-0.18px;font-style:italic">{mesh1}</div>
<svg class="co" style="left:43px;top:625px" width="8" height="13" viewBox="0 0 8 13"><path d="M1.5 1.5 L6.5 6.5 L1.5 11.5 Z" fill="#fff" stroke="#8f8f8f" stroke-width="1.1"/></svg>
<div class="ic" style="left:61.0px;top:625.0px"><svg width="20" height="14" viewBox="0 0 20 14"><path d="M1 5 Q3.5 2.5 5.5 6 Q6.5 8.5 8 8.5" stroke="#2e9db5" stroke-width="1.1" fill="none"/><circle cx="10.5" cy="9" r="2.6" fill="none" stroke="#2e9db5" stroke-width="1.1"/><circle cx="16.3" cy="9" r="2.6" fill="none" stroke="#2e9db5" stroke-width="1.1"/><path d="M12.5 7 Q13.5 5.5 14.5 7" stroke="#2e9db5" stroke-width="1" fill="none"/></svg></div>
<div class="tr" style="left:87.8px;top:622px;letter-spacing:-0.33px">Study 1</div>
<div class="tr" style="left:143.0px;top:622px;letter-spacing:0.11px;font-style:italic">{std1}</div>
<div class="ex" style="left:43px;top:650px"></div>
<div class="ic" style="left:61.0px;top:645.5px"><svg width="20" height="17" viewBox="0 0 20 17"><rect x="3" y="1" width="10" height="8" fill="#d8d8d8" stroke="#8a8a8a" stroke-width=".6"/><rect x="4.5" y="2.5" width="10" height="8" fill="#d8d8d8" stroke="#8a8a8a" stroke-width=".6"/><rect x="6" y="4" width="11" height="8.5" fill="#e6e6e6" stroke="#777" stroke-width=".7"/><rect x="7.5" y="5.3" width="8" height="5.8" fill="#c2186b"/><path d="M2 13 H18 V15.5 H2Z" fill="#cfcfcf" stroke="#7a7a7a" stroke-width=".6"/></svg></div>
<div class="tr" style="left:87.8px;top:644px;letter-spacing:-0.20px">Results</div>
<svg class="co" style="left:68px;top:669px" width="8" height="13" viewBox="0 0 8 13"><path d="M1.5 1.5 L6.5 6.5 L1.5 11.5 Z" fill="#fff" stroke="#8f8f8f" stroke-width="1.1"/></svg>
<div class="ic" style="left:88.0px;top:668.0px"><svg width="16" height="16" viewBox="0 0 16 16"><g fill="#c2307a"><rect x="2" y="1" width="9" height="2.2"/><rect x="2" y="4.4" width="9" height="2.2"/><rect x="2" y="8.6" width="9" height="2.2"/><rect x="2" y="12" width="9" height="2.2"/><rect x="12" y="1" width="1.6" height="5.6"/><rect x="12" y="8.6" width="1.6" height="5.6"/></g><path d="M4.5 1v14M8 1v14" stroke="#fff" stroke-width=".8"/></svg></div>
<div class="tr" style="left:113.0px;top:666px;letter-spacing:0.14px">Datasets</div>
<div class="ic" style="left:86.0px;top:690.5px"><svg width="20" height="15" viewBox="0 0 20 15"><path d="M8 1 V13 M8 13 L1.5 8.5 M8 13 L18 8" stroke-width="1" fill="none" stroke="#999"/><path d="M8 1.5 V13" stroke="#3d8fd8" stroke-width="1"/><path d="M8 13 L2 8.5" stroke="#4caf50" stroke-width="1"/><path d="M8 13 L17.5 8" stroke="#e8336d" stroke-width="1"/><circle cx="8" cy="1.5" r="1" fill="#3d8fd8"/><circle cx="2" cy="8.5" r="1.2" fill="#4caf50"/><circle cx="17.5" cy="8" r="1.2" fill="#e8336d"/></svg></div>
<div class="tr" style="left:113.0px;top:688px;letter-spacing:-0.05px">Views</div>
<div class="ic" style="left:88.0px;top:712.0px"><svg width="16" height="16" viewBox="0 0 16 16"><text x="0" y="7" font-family="Liberation Sans, sans-serif" font-size="6.5" font-weight="bold" fill="#c2307a">8.85</text><text x="0" y="13.5" font-family="Liberation Sans, sans-serif" font-size="6.5" font-weight="bold" fill="#c2307a">e-12</text></svg></div>
<div class="tr" style="left:113.0px;top:710px;letter-spacing:0.23px">Derived Values</div>
<div class="ic" style="left:88.0px;top:734.0px"><svg width="16" height="16" viewBox="0 0 16 16"><rect x=".5" y=".5" width="15" height="15" fill="#f3d3e2" stroke="#c2307a" stroke-width="1"/><rect x="1" y="1" width="14" height="4" fill="#c2307a"/><rect x="5.5" y="5.5" width="5" height="5" fill="#d978a7"/><path d="M5.5 1v14M10.5 1v14M1 5.5h14M1 10.5h14" stroke="#fff" stroke-width="1"/></svg></div>
<div class="tr" style="left:113.0px;top:732px;letter-spacing:-0.07px">Tables</div>
<svg class="co" style="left:68px;top:757px" width="8" height="13" viewBox="0 0 8 13"><path d="M1.5 1.5 L6.5 6.5 L1.5 11.5 Z" fill="#fff" stroke="#8f8f8f" stroke-width="1.1"/></svg>
<div class="ic" style="left:87.5px;top:755.5px"><svg width="17" height="17" viewBox="0 0 17 17"><path d="M1 2 H10 Q10 7 16 7 V14 Q16 16 14 16 H5 L1 13 Z" fill="#c2186b"/><path d="M1 2 L4.5 4.5 V16" stroke="#e8a0c4" stroke-width=".8" fill="none"/><path d="M14 0 l.9 2 2-.6 -.9 1.9 1.8 1.1 -2.1.5 .2 2.1 -1.9-1.2 -1.6 1.4 .1-2.2 -2.1-.6 1.9-1 -.8-2 2 .8z" fill="#555"/></svg></div>
<div class="tr" style="left:113.0px;top:754px;letter-spacing:0.32px">3D Plot Group 1</div>
<div class="tr" style="left:227.0px;top:754px;letter-spacing:-0.15px;font-style:italic">{pg1}</div>
<svg class="co" style="left:68px;top:779px" width="8" height="13" viewBox="0 0 8 13"><path d="M1.5 1.5 L6.5 6.5 L1.5 11.5 Z" fill="#fff" stroke="#8f8f8f" stroke-width="1.1"/></svg>
<div class="ic" style="left:86.5px;top:779.0px"><svg width="19" height="14" viewBox="0 0 19 14"><path d="M1 8 C3 1.5 6.5 1.5 9 7 S15 12.5 18 6" stroke="#d6397f" stroke-width="1.2" fill="none"/></svg></div>
<div class="tr" style="left:113.0px;top:776px;letter-spacing:0.32px">1D Plot Group 2</div>
<div class="tr" style="left:227.0px;top:776px;letter-spacing:-0.15px;font-style:italic">{pg2}</div>
<svg class="co" style="left:68px;top:801px" width="8" height="13" viewBox="0 0 8 13"><path d="M1.5 1.5 L6.5 6.5 L1.5 11.5 Z" fill="#fff" stroke="#8f8f8f" stroke-width="1.1"/></svg>
<div class="ic" style="left:86.5px;top:801.0px"><svg width="19" height="14" viewBox="0 0 19 14"><path d="M1 8 C3 1.5 6.5 1.5 9 7 S15 12.5 18 6" stroke="#d6397f" stroke-width="1.2" fill="none"/></svg></div>
<div class="tr" style="left:113.0px;top:798px;letter-spacing:0.32px">1D Plot Group 3</div>
<div class="tr" style="left:227.0px;top:798px;letter-spacing:-0.15px;font-style:italic">{pg3}</div>
<svg class="co" style="left:68px;top:823px" width="8" height="13" viewBox="0 0 8 13"><path d="M1.5 1.5 L6.5 6.5 L1.5 11.5 Z" fill="#fff" stroke="#8f8f8f" stroke-width="1.1"/></svg>
<div class="ic" style="left:87.5px;top:822.0px"><svg width="17" height="16" viewBox="0 0 17 16"><path d="M1 3 L4 1 H15 L12 3Z" fill="#e9b5d0" stroke="#c2307a" stroke-width=".7"/><path d="M1 3 H12 L15 6 V15 H5 L1 11Z" fill="#f6e3ee" stroke="#c2307a" stroke-width=".9"/><path d="M2 5.5H12M3 7.5H13" stroke="#c2307a" stroke-width="1"/><rect x="6" y="9.5" width="8" height="4" fill="#fff" stroke="#c2307a" stroke-width=".8"/></svg></div>
<div class="tr" style="left:113.0px;top:820px;letter-spacing:0.37px">Export</div>
<div class="ic" style="left:87.0px;top:843.5px"><svg width="18" height="17" viewBox="0 0 18 17"><path d="M1 2 H8.5 V15 H1Z M8.5 2 H16 V15 H8.5Z" fill="#fff" stroke="#9a9a9a" stroke-width=".8"/><path d="M2.5 5H7M2.5 7.5H7M2.5 10H7M10 5H14.5M10 7.5H14.5" stroke="#c2307a" stroke-width=".9"/><path d="M9 9 L15 16 L16.5 12.5 Z" fill="#c2307a"/></svg></div>
<div class="tr" style="left:113.0px;top:842px;letter-spacing:0.13px">Reports</div>
<div class="redbox" style="left:84.600px;top:465.500px;width:249.800px;height:28.500px;border-width:4.100px"></div>

<!-- settings -->
<div class="panel" style="left:499px;top:177px;width:602px;height:813px;border-color:#dcdee4"></div>
<div class="a" style="left:500px;top:215px;width:600px;height:1px;background:#d4d6da"></div>
<div class="a" style="left:505px;top:184px;width:74px;height:32px;background:#fbfcfe;border:1px solid #d4d6da;border-bottom:none;border-radius:3px 3px 0 0"></div>
<div class="ptab" style="left:512px;top:194px;color:#2e5fa3">Settings</div>
<div class="a" style="left:589px;top:185px;width:111px;height:30px;background:#e9e9ea;border-radius:2px 2px 0 0"></div>
<div class="ptab" style="left:594px;top:194px;color:#111">Properties</div>
<svg class="a" style="left:680px;top:194px" width="11" height="11" viewBox="0 0 11 11"><path d="M1 1 L10 10 M10 1 L1 10" stroke="#b4c4da" stroke-width="1.3"/></svg>
<div class="a" style="left:1069px;top:200px;width:0;height:0;border-left:5px solid transparent;border-right:5px solid transparent;border-top:5px solid #c8d0dc"></div>
<svg class="a" style="left:1086px;top:196px" width="10" height="13" viewBox="0 0 10 13"><path d="M2.5 1 H7.5 V7 L9.5 9 H0.5 L2.5 7 Z M5 9 V13" fill="#c8d0dc" stroke="#c8d0dc" stroke-width="1"/></svg>
<div class="t" style="left:508px;top:231px;font-size:16.5px;color:#2e5fa3;letter-spacing:.85px;-webkit-text-stroke:.2px #fbfcfe">Helmholtz Equation</div>
<div class="lb" style="left:506px;top:275px;letter-spacing:0">Label:</div>
<div class="inp" style="left:559px;top:270px;width:498px;height:22px;padding-left:3px;line-height:22px">Helmholtz Equation 1</div>
<div class="a" style="left:1069px;top:267px;width:25px;height:27px;border:2px solid #8c8c8c;border-radius:3px;background:#ececec"></div>
<svg class="a" style="left:1072px;top:270px" width="19" height="21" viewBox="0 0 19 21"><rect x="1.5" y="2.5" width="16" height="16" fill="#fff" stroke="#8a8a8a" stroke-width="1"/><rect x="1.5" y="2.5" width="16" height="3" fill="#9a9a9a"/><path d="M5 9.5 H15 M5 12.5 H15" stroke="#4a9a3a" stroke-width="1.6"/><path d="M1 13 L5 12 L6 16 L3 15 L1.5 18Z" fill="#3a8a2a"/></svg>
<div class="sh" style="top:306px;height:32px"></div>
<div class="shd" style="top:319px"></div>
<div class="sht" style="top:306px;line-height:32px;letter-spacing:0.53px">Domain Selection</div>
<div class="lb" style="left:506px;top:357px;letter-spacing:.27px">Selection:</div>
<div class="a" style="left:582px;top:351px;width:512px;height:24px;background:linear-gradient(#f0f0f0,#e8e8e8);border:2px solid #9c9c9c;border-radius:3px"></div>
<div class="lb" style="left:597px;top:356px;color:#6e6e6e;letter-spacing:.66px">All domains</div>
<svg class="a" style="left:1077px;top:361px" width="10" height="6" viewBox="0 0 10 6"><path d="M0.500 0.500 H9.500 L5 5.500Z" fill="#d4d4d4"/></svg>
<div class="a" style="left:506px;top:385px;width:49px;height:49px;background:linear-gradient(#b4d8f8,#a4cef4 80%,#9cc6f0);border:1px solid #4878bc;border-radius:2px"></div>
<svg class="a" style="left:511px;top:399px" width="38" height="20" viewBox="0 0 38 20"><rect x=".75" y="1.750" width="36.5" height="15.500" rx="2" fill="#dcdcdc" stroke="#8a8a8a" stroke-width="1.200"/><rect x="4" y="6" width="20" height="7" rx="3" fill="#49a83a"/><rect x="24" y="4" width="11" height="11" rx="2.500" fill="#b8b8b8" stroke="#64789a" stroke-width="1.200"/></svg>
<div class="a" style="left:565px;top:385px;width:449px;height:147px;background:#fff;border:1px solid #dcdcdc;border-bottom-color:#cfcfcf"></div>
<div class="lb" style="left:572px;top:392px">1</div>
<svg class="a" style="left:1033px;top:388px" width="17" height="16" viewBox="0 0 17 16"><path d="M2 2 L12 10" stroke="#7a9cc8" stroke-width="4" stroke-linecap="round"/><circle cx="12.5" cy="11.5" r="3.2" fill="#3d6eb4"/><path d="M3 1.5 L6 4" stroke="#c8d6ea" stroke-width="1.2"/></svg>
<svg class="a" style="left:1033px;top:411px" width="17" height="17" viewBox="0 0 17 17"><rect x="1" y="1.5" width="9" height="10" fill="#f4f6fa" stroke="#9aa8bc" stroke-width="1"/><rect x="6" y="5" width="10" height="11" fill="#fff" stroke="#8e9cb2" stroke-width="1"/><rect x="8.5" y="8" width="5" height="5" fill="#3d6eb4"/><path d="M2.5 4H8M2.5 6.5H5" stroke="#9aa8bc" stroke-width=".8"/></svg>
<svg class="a" style="left:1033px;top:434px" width="17" height="19" viewBox="0 0 17 19"><rect x="1" y="3" width="10" height="13" rx="1" fill="#d4d4d4"/><rect x="3.5" y="1" width="5" height="3.5" rx="1" fill="#c0c0c0"/><rect x="6" y="7" width="10" height="11" fill="#fafafa" stroke="#cfcfcf" stroke-width="1"/></svg>
<svg class="a" style="left:1031px;top:457px" width="21" height="21" viewBox="0 0 21 21"><rect x="5.5" y="5.5" width="10" height="10" rx="1.5" fill="#fff" stroke="#666" stroke-width="1.1"/><path d="M10.5 8V13M8 10.5H13" stroke="#666" stroke-width="1"/><path d="M10.500 0.500l2.500 3h-5zM10.500 20.500l2.500-3h-5zM0.500 10.500l3-2.500v5zM20.500 10.500l-3-2.500v5z" fill="#3f8ad6"/></svg>
<div class="a" style="left:1075px;top:393.500px;width:14px;height:3.600px;background:#adadad;border-radius:1.500px"></div><div class="a" style="left:1080.200px;top:388.300px;width:3.600px;height:14px;background:#adadad;border-radius:1.500px"></div>
<div class="a" style="left:1075px;top:417.500px;width:14px;height:3.600px;background:#c4c4c4;border-radius:1.500px"></div>
<svg class="a" style="left:1073px;top:435px" width="18" height="18" viewBox="0 0 18 18"><rect x="3" y="2" width="13" height="13" fill="#ededed" stroke="#d6d6d6" stroke-width="1" stroke-dasharray="2 1"/><path d="M3 1 L10 14 L13 16 L15 13 L12 10 Z" fill="#cfcfcf"/></svg>
<div class="sh" style="top:548px;height:32px"></div>
<svg class="a" style="left:507px;top:557px" width="8" height="13" viewBox="0 0 8 13"><path d="M1.5 1.5 L6.5 6.5 L1.5 11.5 Z" fill="none" stroke="#9a9a9a" stroke-width="1"/></svg>
<div class="sht" style="top:548px;line-height:32px;letter-spacing:0.7px">Override and Contribution</div>
<div class="sh" style="top:583px;height:32px"></div>
<svg class="a" style="left:507px;top:592px" width="8" height="13" viewBox="0 0 8 13"><path d="M1.5 1.5 L6.5 6.5 L1.5 11.5 Z" fill="none" stroke="#9a9a9a" stroke-width="1"/></svg>
<div class="sht" style="top:583px;line-height:32px;letter-spacing:0.5px">Equation</div>
<div class="sh" style="top:618px;height:32px"></div>
<div class="shd" style="top:631px"></div>
<div class="sht" style="top:618px;line-height:32px;letter-spacing:0.51px">Diffusion Coefficient</div>
<div class="inp" style="left:532px;top:663px;width:536px;height:22px">D</div>
<div class="lb" style="left:1080px;top:668px">m</div>
<div class="lb" style="left:508px;top:683px;font-style:italic">c</div>
<div class="a" style="left:532px;top:695px;width:536px;height:24px;background:linear-gradient(#f6f6f6,#e6e6e6);border:1.5px solid #8e8e8e;border-radius:3px"></div>
<div class="lb" style="left:547px;top:700px;letter-spacing:.63px">Isotropic</div>
<div class="a" style="left:1054px;top:706px;width:0;height:0;border-left:4px solid transparent;border-right:4px solid transparent;border-top:5px solid #111"></div>
<div class="sh" style="top:734px;height:32px"></div>
<div class="shd" style="top:747px"></div>
<div class="sht" style="top:734px;line-height:32px;letter-spacing:0.31px">Source Term</div>
<div class="lb" style="left:507px;top:782px;font-style:italic">f</div>
<div class="inp" style="left:531px;top:779px;width:511px;height:22px">0</div>
<div class="lb" style="left:1054px;top:784px">W/m<span style="font-size:9px;position:relative;top:-5px">3</span></div>
<div class="sh" style="top:816px;height:32px"></div>
<div class="shd" style="top:829px"></div>
<div class="sht" style="top:816px;line-height:32px;letter-spacing:0.6px">Absorption Coefficient</div>
<div class="lb" style="left:508px;top:865px;font-style:italic">a</div>
<div class="inp" style="left:532px;top:861px;width:521px;height:22px">mua</div>
<div class="lb" style="left:1067px;top:866px">1/m</div>
<div class="redbox" style="left:495.700px;top:621.300px;width:607.800px;height:108.200px;border-width:4.400px"></div>
<div class="redbox" style="left:497.600px;top:818.200px;width:605.900px;height:72.100px;border-width:4.500px"></div>

<!-- graphics -->
<div class="panel" style="left:1107px;top:177px;width:809px;height:575px;border-color:#dcdee4;background:#fafbfe"></div>
<div class="a" style="left:1108px;top:268px;width:807px;height:483px;background:linear-gradient(#fafbff 0%,#f0f6fe 42%,#e5f0fd 100%)"></div>
<div class="a" style="left:1915px;top:178px;width:1px;height:573px;background:#d9dbe0"></div>
<div class="t" style="left:1117px;top:188px;font-size:26px;color:#24559c;letter-spacing:-.7px;-webkit-text-stroke:.7px #fafbfe">Graphics</div>
<div class="a" style="left:1883px;top:197px;width:0;height:0;border-left:5px solid transparent;border-right:5px solid transparent;border-top:5px solid #d3dae4"></div>
<svg class="a" style="left:1900px;top:192px" width="10" height="13" viewBox="0 0 10 13"><path d="M2.5 1 H7.5 V7 L9.5 9 H0.5 L2.5 7 Z M5 9 V13" fill="#d3dae4" stroke="#d3dae4" stroke-width="1"/></svg>
<svg class="a" style="left:1117.5px;top:220.5px" width="18" height="18" viewBox="0 0 18 18"><circle cx="7" cy="7" r="5.2" fill="#fff" stroke="#2c4f7c" stroke-width="1.8"/><path d="M11 11 L16 16" stroke="#2c4f7c" stroke-width="2.6" stroke-linecap="round"/><path d="M4.500 7H9.500M7 4.500V9.500" stroke="#2c4f7c" stroke-width="1.5"/></svg>
<svg class="a" style="left:1145.5px;top:220.5px" width="18" height="18" viewBox="0 0 18 18"><circle cx="7" cy="7" r="5.2" fill="#fff" stroke="#2c4f7c" stroke-width="1.8"/><path d="M11 11 L16 16" stroke="#2c4f7c" stroke-width="2.6" stroke-linecap="round"/><path d="M4.500 7H9.500" stroke="#2c4f7c" stroke-width="1.5"/></svg>
<svg class="a" style="left:1171.0px;top:220.5px" width="22" height="18" viewBox="0 0 22 18"><rect x="1" y="8" width="9" height="8" fill="none" stroke="#5a6e8a" stroke-width="1" stroke-dasharray="2 1.2"/><g transform="translate(5,0)"><circle cx="7" cy="7" r="5.2" fill="#fff" stroke="#2c4f7c" stroke-width="1.8"/><path d="M11 11 L16 16" stroke="#2c4f7c" stroke-width="2.6" stroke-linecap="round"/><path d="M4.500 7H9.500M7 4.500V9.500" stroke="#2c4f7c" stroke-width="1.5"/></g></svg>
<div class="a" style="left:1201.0px;top:227.0px;width:0;height:0;border-left:4.500px solid transparent;border-right:4.500px solid transparent;border-top:5px solid #1a1a1a"></div>
<svg class="a" style="left:1221.5px;top:217.5px" width="24" height="24" viewBox="0 0 24 24"><rect x="6.500" y="6.500" width="11" height="11" rx="1.5" fill="#fff" stroke="#555" stroke-width="1.1"/><path d="M12 9V15M9 12H15" stroke="#555" stroke-width="1"/><path d="M12 0.500l3 3.500h-6zM12 23.500l3-3.500h-6zM0.500 12l3.500-3v6zM23.500 12l-3.500-3v6z" fill="#3f8ad6"/></svg>
<svg class="a" style="left:1251.5px;top:219.0px" width="21" height="21" viewBox="0 0 21 21"><rect x=".5" y=".5" width="20" height="20" fill="#fff" stroke="#8a8a8a" stroke-width="1"/><path d="M10.500 3V18M3 10.500H18" stroke="#555" stroke-width="1"/><path d="M10.500 1.500l2 2.500h-4zM10.500 19.500l2-2.500h-4zM1.500 10.500l2.500-2v4zM19.500 10.500l-2.500-2v4z" fill="#3f8ad6"/></svg>
<div class="a" style="left:1281px;top:219.5px;width:1px;height:21px;background:#d3dae4"></div>
<svg class="a" style="left:1288.5px;top:220.5px" width="22" height="18" viewBox="0 0 22 18"><path d="M9 1V14" stroke="#3d7fd0" stroke-width="1.1"/><path d="M9 14L2 8" stroke="#4caf50" stroke-width="1.1"/><path d="M9 14L20 8.500" stroke="#e8336d" stroke-width="1.1"/><circle cx="9" cy="1.500" r="1.100" fill="#3d7fd0"/><circle cx="2" cy="8" r="1.300" fill="#4caf50"/><circle cx="20" cy="8.500" r="1.300" fill="#e8336d"/></svg>
<div class="a" style="left:1319.0px;top:227.0px;width:0;height:0;border-left:4.500px solid transparent;border-right:4.500px solid transparent;border-top:5px solid #1a1a1a"></div>
<svg class="a" style="left:1341.5px;top:221.0px" width="21" height="17" viewBox="0 0 21 17"><path d="M3 1V15" stroke="#4caf50" stroke-width="1.1"/><path d="M3 15H19" stroke="#e8336d" stroke-width="1.1"/><circle cx="3" cy="1.500" r="1.100" fill="#4caf50"/><circle cx="19" cy="15" r="1.200" fill="#e8336d"/><text x="7" y="9.500" font-family="Liberation Sans, sans-serif" font-size="8.500" fill="#333">xy</text></svg>
<svg class="a" style="left:1369.5px;top:221.0px" width="21" height="17" viewBox="0 0 21 17"><path d="M3 1V15" stroke="#3d7fd0" stroke-width="1.1"/><path d="M3 15H19" stroke="#4caf50" stroke-width="1.1"/><circle cx="3" cy="1.500" r="1.100" fill="#3d7fd0"/><circle cx="19" cy="15" r="1.200" fill="#4caf50"/><text x="7" y="9.500" font-family="Liberation Sans, sans-serif" font-size="8.500" fill="#333">yz</text></svg>
<svg class="a" style="left:1397.0px;top:221.0px" width="21" height="17" viewBox="0 0 21 17"><path d="M3 1V15" stroke="#3d7fd0" stroke-width="1.1"/><path d="M3 15H19" stroke="#e8336d" stroke-width="1.1"/><circle cx="3" cy="1.500" r="1.100" fill="#3d7fd0"/><circle cx="19" cy="15" r="1.200" fill="#e8336d"/><text x="7" y="9.500" font-family="Liberation Sans, sans-serif" font-size="8.500" fill="#333">xz</text></svg>
<svg class="a" style="left:1427.0px;top:220.5px" width="18" height="18" viewBox="0 0 18 18"><rect x="1" y="1" width="6" height="16" rx="1.500" fill="#3f78c0"/><path d="M7 6 L14 2 Q17 9 14 16 L7 12Z" fill="#6a9ad6"/><ellipse cx="14" cy="9" rx="2.200" ry="6" fill="#b6cdea"/></svg>
<div class="a" style="left:1455px;top:219.5px;width:1px;height:21px;background:#d3dae4"></div>
<svg class="a" style="left:1465.5px;top:221.0px" width="17" height="17" viewBox="0 0 17 17"><path d="M13.500 4.500 A6.200 6.200 0 1 0 15 9.500" fill="none" stroke="#4a86cc" stroke-width="1.400"/><path d="M10.500 1 L15.500 3.500 L11 7 Z" fill="#4a86cc"/></svg>
<div class="a" style="left:1492.0px;top:227.0px;width:0;height:0;border-left:4.500px solid transparent;border-right:4.500px solid transparent;border-top:5px solid #1a1a1a"></div>
<div class="a" style="left:1515px;top:219.5px;width:1px;height:21px;background:#d3dae4"></div>
<svg class="a" style="left:1523.0px;top:221.5px" width="22" height="16" viewBox="0 0 22 16"><path d="M3 1.500 H19 Q21.500 8 19 14.500 H3 Q0.500 8 3 1.500Z" fill="#34557f"/><path d="M3 1.500 Q5.500 8 3 14.500" stroke="#9ab0cc" stroke-width=".8" fill="none"/><path d="M4 7.500H20" stroke="#6d87a8" stroke-width=".6"/></svg>
<div class="a" style="left:1553.0px;top:227.0px;width:0;height:0;border-left:4.500px solid transparent;border-right:4.500px solid transparent;border-top:5px solid #1a1a1a"></div>
<div class="a" style="left:1577px;top:219.5px;width:1px;height:21px;background:#d3dae4"></div>
<svg class="a" style="left:1586.0px;top:222.0px" width="20" height="15" viewBox="0 0 20 15"><path d="M1 7 Q1 13 6 13.500 H14 Q19 13 19 7 Z" fill="#e6e6e6" stroke="#c4c4c4" stroke-width=".8"/><path d="M1 7 H19" stroke="#bdbdbd" stroke-width=".8"/><rect x="8" y="1" width="8" height="6" fill="#f4f4f4" stroke="#c4c4c4" stroke-width=".8"/><rect x="9.500" y="3" width="5" height="3" fill="#b4b4b4"/></svg>
<div class="a" style="left:1615.0px;top:227.0px;width:0;height:0;border-left:4.500px solid transparent;border-right:4.500px solid transparent;border-top:5px solid #9a9a9a"></div>
<svg class="a" style="left:1638.5px;top:222.0px" width="20" height="15" viewBox="0 0 20 15"><path d="M1 6 Q1 13 6 13.500 H14 Q19 13 19 6 Q19 3 15 3 H5 Q1 3 1 6Z" fill="#a8a8a8"/><rect x="7" y="1" width="7" height="5" fill="#dcdcdc" stroke="#bdbdbd" stroke-width=".8"/></svg>
<div class="a" style="left:1667.0px;top:227.0px;width:0;height:0;border-left:4.500px solid transparent;border-right:4.500px solid transparent;border-top:5px solid #9a9a9a"></div>
<svg class="a" style="left:1691.5px;top:220.5px" width="18" height="18" viewBox="0 0 18 18"><rect x="1" y="1" width="14" height="14" fill="none" stroke="#d0d0d0" stroke-width="1" stroke-dasharray="2 1.500"/><rect x="4" y="4" width="8" height="8" rx="1" fill="#c4c4c4"/><path d="M8 8 L16 15 L13 15.500 L14.500 18 L13 18 L11.500 16 L9.500 17.500Z" fill="#a8a8a8"/></svg>
<svg class="a" style="left:1718.5px;top:220.0px" width="18" height="19" viewBox="0 0 18 19"><rect x="4" y="2" width="13" height="14" fill="#e4e4e4" stroke="#d0d0d0" stroke-width="1" stroke-dasharray="2 1.500"/><path d="M2 0 L9 15 L12 18 L14 15 L11 11Z" fill="#c0c0c0"/></svg>
<div class="a" style="left:1747px;top:219.5px;width:1px;height:21px;background:#d3dae4"></div>
<svg class="a" style="left:1755.5px;top:222.5px" width="20" height="14" viewBox="0 0 20 14"><path d="M1 7 Q10 -1 19 7 Q10 15 1 7Z" fill="#c6c6c6" stroke="#a0a0a0" stroke-width="1"/><ellipse cx="10" cy="7" rx="4" ry="3" fill="#e6e6e6"/><path d="M4 1 L17 13" stroke="#3d5f94" stroke-width="1.600"/></svg>
<svg class="a" style="left:1783.0px;top:219.5px" width="22" height="20" viewBox="0 0 22 20"><path d="M10 9 A4.500 4.500 0 1 0 6 4.500" fill="none" stroke="#2c4f7c" stroke-width="1.700"/><path d="M3 3 L8.500 3 L6 7.500Z" fill="#2c4f7c"/><path d="M1 15.500 Q5.500 11 10 15.500 Q5.500 20 1 15.500Z" fill="#2c4f7c"/><circle cx="5.500" cy="15.500" r="1.300" fill="#cfe0f4"/><path d="M13 15.500 Q17 11.500 21 15.500 Q17 19.500 13 15.500Z" fill="#8ea4c2"/><path d="M14 12 L21 19" stroke="#2c4f7c" stroke-width="1.300"/></svg>
<svg class="a" style="left:1811.5px;top:220.0px" width="21" height="19" viewBox="0 0 21 19"><rect x="1" y="1" width="19" height="17" fill="#fff" stroke="#2c5a94" stroke-width="1.600"/><rect x="1" y="1" width="19" height="3" fill="#3f78c0"/><path d="M5 8 Q10.500 3.500 16 8 Q10.500 12.500 5 8Z" fill="#2c4f7c"/><circle cx="10.500" cy="8" r="1.300" fill="#cfe0f4"/><path d="M6 14 Q10.500 10.500 15 14 Q10.500 17.500 6 14Z" fill="#8ea4c2"/><path d="M7.500 11.500 L14 17" stroke="#2c4f7c" stroke-width="1.100"/></svg>
<div class="a" style="left:1841.0px;top:227.0px;width:0;height:0;border-left:4.500px solid transparent;border-right:4.500px solid transparent;border-top:5px solid #1a1a1a"></div>
<div class="a" style="left:1865px;top:219.5px;width:1px;height:21px;background:#d3dae4"></div>
<div class="a" style="left:1873px;top:219px;width:22px;height:22px;background:linear-gradient(#cfe5fb,#8fc1f0);border:1px solid #4a8ad4;border-radius:3px"></div>
<svg class="a" style="left:1876.0px;top:222.0px" width="16" height="16" viewBox="0 0 16 16"><path d="M1 8 L10 2 V14 Z" fill="#3a6fb4"/><path d="M10 2 L14.500 4.500 Q16 8 14.500 11.500 L10 14Z" fill="#e4effb" stroke="#7aa4d8" stroke-width=".8"/></svg>
<svg class="a" style="left:1116.5px;top:246.0px" width="19" height="15" viewBox="0 0 19 15"><path d="M2 3 L5 1 H17 L15 3Z" fill="#d6e4f5" stroke="#8eb0dc" stroke-width=".8"/><rect x="2" y="3" width="13.500" height="10.500" rx="1.500" fill="#cfe0f4" stroke="#8eb0dc" stroke-width=".9"/><path d="M15.500 3 L17.500 1.500 V11.500 L15.500 13.500" fill="#b9d0ec" stroke="#8eb0dc" stroke-width=".8"/><rect x="4" y="5" width="9.500" height="6.500" fill="#e6effa" stroke="#a9c3e4" stroke-width=".6"/></svg>
<svg class="a" style="left:1144.0px;top:245.5px" width="20" height="16" viewBox="0 0 20 16"><path d="M1.500 4 L5 1.500 H18 L15 4Z M1.500 4 V13 H15 V4 M15 13 L18.500 10.500 V1.500 M5 1.500 V10.500 L1.500 13 M5 10.500 H18.500" fill="none" stroke="#9dbbe2" stroke-width="1"/></svg>
<div class="a" style="left:1171px;top:243px;width:22px;height:22px;background:linear-gradient(#3a78c8 0%,#a8d0f6 25%,#cfe6fb 60%,#8fc1f0 100%);border:1px solid #3a72c0;border-radius:3px"></div>
<div class="a" style="left:1199px;top:243px;width:22px;height:22px;background:linear-gradient(#3a78c8 0%,#a8d0f6 25%,#cfe6fb 60%,#8fc1f0 100%);border:1px solid #3a72c0;border-radius:3px"></div>
<svg class="a" style="left:1174.0px;top:247.0px" width="16" height="14" viewBox="0 0 16 14"><rect x=".5" y=".5" width="15" height="13" rx="2" fill="#dcecfb" stroke="#6a9ad6" stroke-width="1"/><path d="M8 3V10" stroke="#3d7fd0" stroke-width="1"/><path d="M8 10L4 7.500" stroke="#4caf50" stroke-width="1"/><path d="M8 10L12.500 7" stroke="#e8336d" stroke-width="1"/></svg>
<svg class="a" style="left:1202.0px;top:247.0px" width="16" height="14" viewBox="0 0 16 14"><rect x=".5" y=".5" width="15" height="13" rx="2" fill="#c6dcf4" stroke="#5a86c0" stroke-width="1"/><path d="M8 2V12M2 7H14" stroke="#4a7ec4" stroke-width="1.200"/><rect x="3" y="2.500" width="10" height="9" rx="1" fill="none" stroke="#4a7ec4" stroke-width=".9"/></svg>
<div class="a" style="left:1229px;top:243.5px;width:1px;height:21px;background:#d3dae4"></div>
<svg class="a" style="left:1238.5px;top:244.5px" width="19" height="18" viewBox="0 0 19 18"><path d="M1 5 L7 2 L16 4 V13 L9 16 L1 13Z" fill="#b8b8b8" stroke="#8a8a8a" stroke-width=".7"/><path d="M1 5 L9 7.500 L16 4 M9 7.500 V16" stroke="#e8e8e8" stroke-width=".8" fill="none"/><path d="M9 7.500 L16 4 V13 L9 16Z" fill="#7ea2d4"/><circle cx="14" cy="14" r="3.300" fill="#f08062"/><path d="M12.300 15.500 L15.700 12.500" stroke="#fff" stroke-width="1"/></svg>
<svg class="a" style="left:1267.0px;top:244.0px" width="19" height="19" viewBox="0 0 19 19"><path d="M9.500 1.500 Q17.500 2 17.500 9 Q17.500 13 13.500 13 Q11.500 13 11.500 15 Q11.500 17.500 8.500 17.500 Q1.500 16 1.500 9 Q2 2 9.500 1.500Z" fill="#d0d0d0" stroke="#9a9a9a" stroke-width=".9"/><circle cx="6" cy="11" r="2.300" fill="#f4f4f4" stroke="#a0a0a0" stroke-width=".6"/><path d="M8 4 L14 3 L15 8 L10 9Z" fill="#f2c230"/><path d="M10 9 L15 8 L14 11Z" fill="#e8526a"/><path d="M8 4 L10 9 L6 8Z" fill="#4a9ae0"/></svg>
<div class="a" style="left:1293.0px;top:251.0px;width:0;height:0;border-left:4.500px solid transparent;border-right:4.500px solid transparent;border-top:5px solid #1a1a1a"></div>
<div class="a" style="left:1317px;top:243.5px;width:1px;height:21px;background:#d3dae4"></div>
<svg class="a" style="left:1325.5px;top:243.5px" width="20" height="20" viewBox="0 0 20 20"><circle cx="10" cy="10" r="7" fill="none" stroke="#4a82c6" stroke-width="4.500" stroke-dasharray="5.200 2.130"/><circle cx="10" cy="10" r="3.600" fill="#fafbfe"/></svg>
<div class="a" style="left:1354.5px;top:251.0px;width:0;height:0;border-left:4.500px solid transparent;border-right:4.500px solid transparent;border-top:5px solid #1a1a1a"></div>
<svg class="a" style="left:1378.5px;top:246.5px" width="18" height="14" viewBox="0 0 18 14"><path d="M1 4 Q1 3 2 3 H5 L6.500 1 H11.500 L13 3 H16 Q17 3 17 4 V12 Q17 13 16 13 H2 Q1 13 1 12Z" fill="#4a82c6"/><circle cx="9" cy="8" r="3.400" fill="#4a82c6" stroke="#cfe0f6" stroke-width="1.200"/></svg>
<svg class="a" style="left:1406.5px;top:244.5px" width="18" height="18" viewBox="0 0 18 18"><rect x="4" y="1" width="10" height="7" fill="#fff" stroke="#4a82c6" stroke-width="1.200"/><path d="M1 8 Q1 7 2 7 H16 Q17 7 17 8 V15 Q17 16 16 16 H2 Q1 16 1 15Z" fill="#4a82c6"/><path d="M3 12.500 H15" stroke="#cfe0f6" stroke-width="1"/></svg>
<svg class="a" style="left:1109px;top:268px" width="806" height="483" viewBox="1109 268 806 483"><path d="M1227 511 L1253 616" stroke="#8c8c8c" stroke-width="1" fill="none"/><path d="M1233.5 537.2 l5 -2" stroke="#8c8c8c" stroke-width="1" fill="none"/><path d="M1240.0 563.5 l5 -2" stroke="#8c8c8c" stroke-width="1" fill="none"/><path d="M1246.5 589.8 l5 -2" stroke="#8c8c8c" stroke-width="1" fill="none"/><path d="M1253.0 616.0 l5 -2" stroke="#8c8c8c" stroke-width="1" fill="none"/><path d="M1260 634.500 L1325.500 712 L1800.500 482" stroke="#8c8c8c" stroke-width="1" fill="none"/><path d="M1449 652.3 l-7 -7.500" stroke="#8c8c8c" stroke-width="1" fill="none"/><path d="M1570.3 594.2 l-7 -7.500" stroke="#8c8c8c" stroke-width="1" fill="none"/><path d="M1686.5 536.1 l-7 -7.500" stroke="#8c8c8c" stroke-width="1" fill="none"/><path d="M1276.4 653.9 l-5 -3" stroke="#8c8c8c" stroke-width="1" fill="none"/><path d="M1292.8 673.2 l-5 -3" stroke="#8c8c8c" stroke-width="1" fill="none"/><path d="M1309.1 692.6 l-5 -3" stroke="#8c8c8c" stroke-width="1" fill="none"/><path d="M1325.5 712.0 l-5 -3" stroke="#8c8c8c" stroke-width="1" fill="none"/><path d="M1232 508 l1.800 9" stroke="#8c8c8c" stroke-width="1" fill="none"/><path d="M1353 454.5 l1.800 9" stroke="#8c8c8c" stroke-width="1" fill="none"/><path d="M1474.5 398.5 l1.800 9" stroke="#8c8c8c" stroke-width="1" fill="none"/><path d="M1592.2 344 l1.800 9" stroke="#8c8c8c" stroke-width="1" fill="none"/><path d="M1742 306 l1.800 16" stroke="#8c8c8c" stroke-width="1" fill="none"/><path d="M1757.5 319 l1.800 16" stroke="#8c8c8c" stroke-width="1" fill="none"/><path d="M1773 331 l1.800 16" stroke="#8c8c8c" stroke-width="1" fill="none"/><path d="M1788.5 345 l1.800 16" stroke="#8c8c8c" stroke-width="1" fill="none"/><path d="M1804.3 358 l1.800 16" stroke="#8c8c8c" stroke-width="1" fill="none"/><path d="M1804.300 358 L1812.500 464" stroke="#8c8c8c" stroke-width="1" fill="none"/><path d="M1805.9 377.0 l-13 -9.500" stroke="#8c8c8c" stroke-width="1" fill="none"/><path d="M1807.6 398.8 l-13 -9.500" stroke="#8c8c8c" stroke-width="1" fill="none"/><path d="M1809.2 420.5 l-13 -9.500" stroke="#8c8c8c" stroke-width="1" fill="none"/><path d="M1810.8 442.2 l-13 -9.500" stroke="#8c8c8c" stroke-width="1" fill="none"/><path d="M1812.5 464.0 l-13 -9.500" stroke="#8c8c8c" stroke-width="1" fill="none"/><polygon points="1234.7,518.2 1715,298.7 1791.5,363.2 1299.7,594.3" fill="#8585b3" stroke="#3434ee" stroke-width="1" stroke-linejoin="round"/><polygon points="1299.7,594.3 1791.5,363.2 1799.8,470 1322.8,700.8" fill="#9595c6" stroke="#3434ee" stroke-width="1" stroke-linejoin="round"/><polygon points="1234.7,518.2 1299.7,594.3 1322.8,700.8 1258.8,624.3" fill="#b7b7f2" stroke="#3434ee" stroke-width="1" stroke-linejoin="round"/><path d="M1161.800 696.300 L1191 682" stroke="#4a82c0" stroke-width="1.800"/><path d="M1194 680.500 L1184.500 680.700 L1187 687Z" fill="#4a82c0"/><path d="M1161.800 696.300 L1145.500 679.500" stroke="#e0206a" stroke-width="2.600"/><path d="M1143 677 L1150 679 L1152 684.500 L1147.500 686 Z" fill="#e0206a"/><path d="M1161.800 696.300 L1158.500 675" stroke="#4aaa44" stroke-width="2.400"/><path d="M1157.500 668 L1162.500 675 L1161 678 L1156 678 L1155 675.500Z" fill="#4aaa44"/><text x="1134" y="676" font-family="DejaVu Sans, Liberation Sans, sans-serif" font-size="13.500" fill="#1a1a1a">x</text><text x="1153" y="662" font-family="DejaVu Sans, Liberation Sans, sans-serif" font-size="13.500" fill="#1a1a1a">y</text><text x="1198" y="681.500" font-family="DejaVu Sans, Liberation Sans, sans-serif" font-size="13.500" fill="#1a1a1a">z</text><text x="1219.6" y="498.2" font-family="Liberation Sans, sans-serif" font-size="15" fill="#111" text-anchor="middle" letter-spacing=".8">0</text><text x="1344.5" y="440.9" font-family="Liberation Sans, sans-serif" font-size="15" fill="#111" text-anchor="middle" letter-spacing=".8">5</text><text x="1464" y="385.3" font-family="Liberation Sans, sans-serif" font-size="15" fill="#111" text-anchor="middle" letter-spacing=".8">10</text><text x="1581.6" y="331.2" font-family="Liberation Sans, sans-serif" font-size="15" fill="#111" text-anchor="middle" letter-spacing=".8">15</text><text x="1752" y="294" font-family="Liberation Sans, sans-serif" font-size="15" fill="#111" text-anchor="middle" letter-spacing=".8">4</text><text x="1767.7" y="306.7" font-family="Liberation Sans, sans-serif" font-size="15" fill="#111" text-anchor="middle" letter-spacing=".8">3</text><text x="1782" y="319.7" font-family="Liberation Sans, sans-serif" font-size="15" fill="#111" text-anchor="middle" letter-spacing=".8">2</text><text x="1798" y="331.9" font-family="Liberation Sans, sans-serif" font-size="15" fill="#111" text-anchor="middle" letter-spacing=".8">1</text><text x="1814.6" y="346.3" font-family="Liberation Sans, sans-serif" font-size="15" fill="#111" text-anchor="middle" letter-spacing=".8">0</text><text x="1826" y="386.6" font-family="Liberation Sans, sans-serif" font-size="15" fill="#111" text-anchor="middle" letter-spacing=".8">4</text><text x="1826.5" y="407.8" font-family="Liberation Sans, sans-serif" font-size="15" fill="#111" text-anchor="middle" letter-spacing=".8">3</text><text x="1827.3" y="430" font-family="Liberation Sans, sans-serif" font-size="15" fill="#111" text-anchor="middle" letter-spacing=".8">2</text><text x="1828.7" y="451.1" font-family="Liberation Sans, sans-serif" font-size="15" fill="#111" text-anchor="middle" letter-spacing=".8">1</text><text x="1831.4" y="472" font-family="Liberation Sans, sans-serif" font-size="15" fill="#111" text-anchor="middle" letter-spacing=".8">0</text><text x="1410.4" y="355.5" font-family="Liberation Sans, sans-serif" font-size="14.500" fill="#111" letter-spacing="1">×10<tspan dy="-6" font-size="9">-3</tspan><tspan dy="6" dx="2"> m</tspan></text><text x="1774" y="291" font-family="Liberation Sans, sans-serif" font-size="14.500" fill="#111" letter-spacing="1">×10<tspan dy="-6" font-size="9">-3</tspan><tspan dy="6" dx="2"> m</tspan></text><text x="1849.8" y="422" font-family="Liberation Sans, sans-serif" font-size="14.500" fill="#111" letter-spacing="1">×10<tspan dy="-6" font-size="9">-3</tspan><tspan dy="6" dx="2"> m</tspan></text></svg>
<svg class="a" style="left:1882.0px;top:276.0px" width="26" height="24" viewBox="0 0 26 24"><path d="M2 5 L20 1 L25 14 L12 23 L3 18Z" fill="#f0f1f4" stroke="#dfe2e8" stroke-width=".8"/><rect x="7" y="6" width="14" height="11" rx="3" fill="#2a52a0"/><path d="M10 8 H15 Q18.500 11.500 15 15 H10Z" fill="#f6d23a"/><path d="M15 8 Q20 11.500 15 15 Q17 11.500 15 8Z" fill="#5ab0e8"/></svg>

<!-- messages -->
<div class="panel" style="left:1107px;top:758px;width:809px;height:232px;border-color:#dcdee4;background:#fafbfe"></div>
<div class="a" style="left:1109px;top:796px;width:806px;height:1px;background:#d4d6da"></div>
<div class="a" style="left:1113px;top:766px;width:111px;height:31px;background:#fafbfe;border:1px solid #d4d6da;border-bottom:none;border-radius:3px 3px 0 0"></div>
<div class="ptab" style="left:1120px;top:775.500px;color:#2e5fa3;font-size:15px;letter-spacing:.48px">Messages</div>
<svg class="a" style="left:1202px;top:776px" width="11" height="11" viewBox="0 0 11 11"><path d="M1 1 L10 10 M10 1 L1 10" stroke="#b4c4da" stroke-width="1.300"/></svg>
<div class="a" style="left:1233px;top:766px;width:75px;height:30px;background:#e9e9ea;border-radius:2px 2px 0 0"></div>
<div class="ptab" style="left:1238px;top:775.500px;color:#111;font-size:15px;letter-spacing:.52px">Progress</div>
<div class="a" style="left:1318px;top:766px;width:38px;height:30px;background:#e9e9ea;border-radius:2px 2px 0 0"></div>
<div class="ptab" style="left:1323px;top:775.500px;color:#111;font-size:15px;letter-spacing:.52px">Log</div>
<div class="a" style="left:1366px;top:766px;width:157px;height:30px;background:#e9e9ea;border-radius:2px 2px 0 0"></div>
<div class="ptab" style="left:1371px;top:775.500px;color:#111;font-size:15px;letter-spacing:.52px">External Process</div>
<svg class="a" style="left:1503px;top:776px" width="11" height="11" viewBox="0 0 11 11"><path d="M1 1 L10 10 M10 1 L1 10" stroke="#b4c4da" stroke-width="1.300"/></svg>
<div class="a" style="left:1533px;top:766px;width:73px;height:30px;background:#e9e9ea;border-radius:2px 2px 0 0"></div>
<div class="ptab" style="left:1538px;top:775.500px;color:#111;font-size:15px;letter-spacing:.52px">Table</div>
<svg class="a" style="left:1586px;top:776px" width="11" height="11" viewBox="0 0 11 11"><path d="M1 1 L10 10 M10 1 L1 10" stroke="#b4c4da" stroke-width="1.300"/></svg>
<div class="a" style="left:1883px;top:781px;width:0;height:0;border-left:5px solid transparent;border-right:5px solid transparent;border-top:5px solid #d3dae4"></div>
<svg class="a" style="left:1900px;top:776px" width="10" height="13" viewBox="0 0 10 13"><path d="M2.500 1 H7.500 V7 L9.500 9 H0.500 L2.500 7 Z M5 9 V13" fill="#d3dae4" stroke="#d3dae4" stroke-width="1"/></svg>
<svg class="a" style="left:1119px;top:806px" width="16" height="20" viewBox="0 0 16 20"><path d="M2 1 L8 12" stroke="#7a6a50" stroke-width="1.300"/><path d="M5 12 L10 10 L14 17 L8 19Z" fill="#e8b98a" stroke="#d09a64" stroke-width=".6"/></svg>
<div class="a" style="left:1113px;top:832px;width:796px;height:152px;background:#fbfcff;border:1px solid #d9dce2"></div>
<div class="t" style="left:1116px;top:837px;font-size:14px;letter-spacing:.05px;color:#1a1a1a">COMSOL Multiphysics 5.5.0.292</div>
<div class="a" style="left:1116px;top:855px;width:792px;height:18px;overflow:hidden"><div class="t" style="left:0;top:2px;font-size:14px;letter-spacing:.36px;color:#1a1a1a">[Jun 28, 2021 11:29 AM] Opened file: C:\Users\oran1\OneDrive - Technion\Final Project\Simulations\COMSOL SIMS\2 Layer Model\plane_src.mph</div></div>
<div class="a" style="left:1114px;top:962px;width:794px;height:21px;background:#f0f0f0"></div>
<div class="a" style="left:1135px;top:963px;width:513px;height:20px;background:#cdcdcd"></div>
<svg class="a" style="left:1120px;top:967px" width="8" height="11" viewBox="0 0 8 11"><path d="M6 1 L2 5.500 L6 10" stroke="#b0b0b0" stroke-width="1.200" fill="none"/></svg>
<svg class="a" style="left:1893px;top:967px" width="8" height="11" viewBox="0 0 8 11"><path d="M2 1 L6 5.500 L2 10" stroke="#b0b0b0" stroke-width="1.200" fill="none"/></svg>

<div class="t" style="left:1074px;top:1008px;font-size:14px;letter-spacing:.35px;color:#222">912 MB | 1292 MB</div>
<div class="a" id="bottomstrip"></div>
<div class="a" style="left:1919.5px;top:0;width:2.5px;height:1033px;background:linear-gradient(#f08a78 0,#f08a78 43px,#2c1c4a 43px,#2c1c4a 112px,#0a0a0a 112px,#0a0a0a 1028px,#4a3412 1028px)"></div>
<div class="a" style="left:3px;top:176px;width:1px;height:230px;background:linear-gradient(#555,rgba(100,100,100,.35) 30%,rgba(120,120,120,0))"></div>
</div>
</body></html>
